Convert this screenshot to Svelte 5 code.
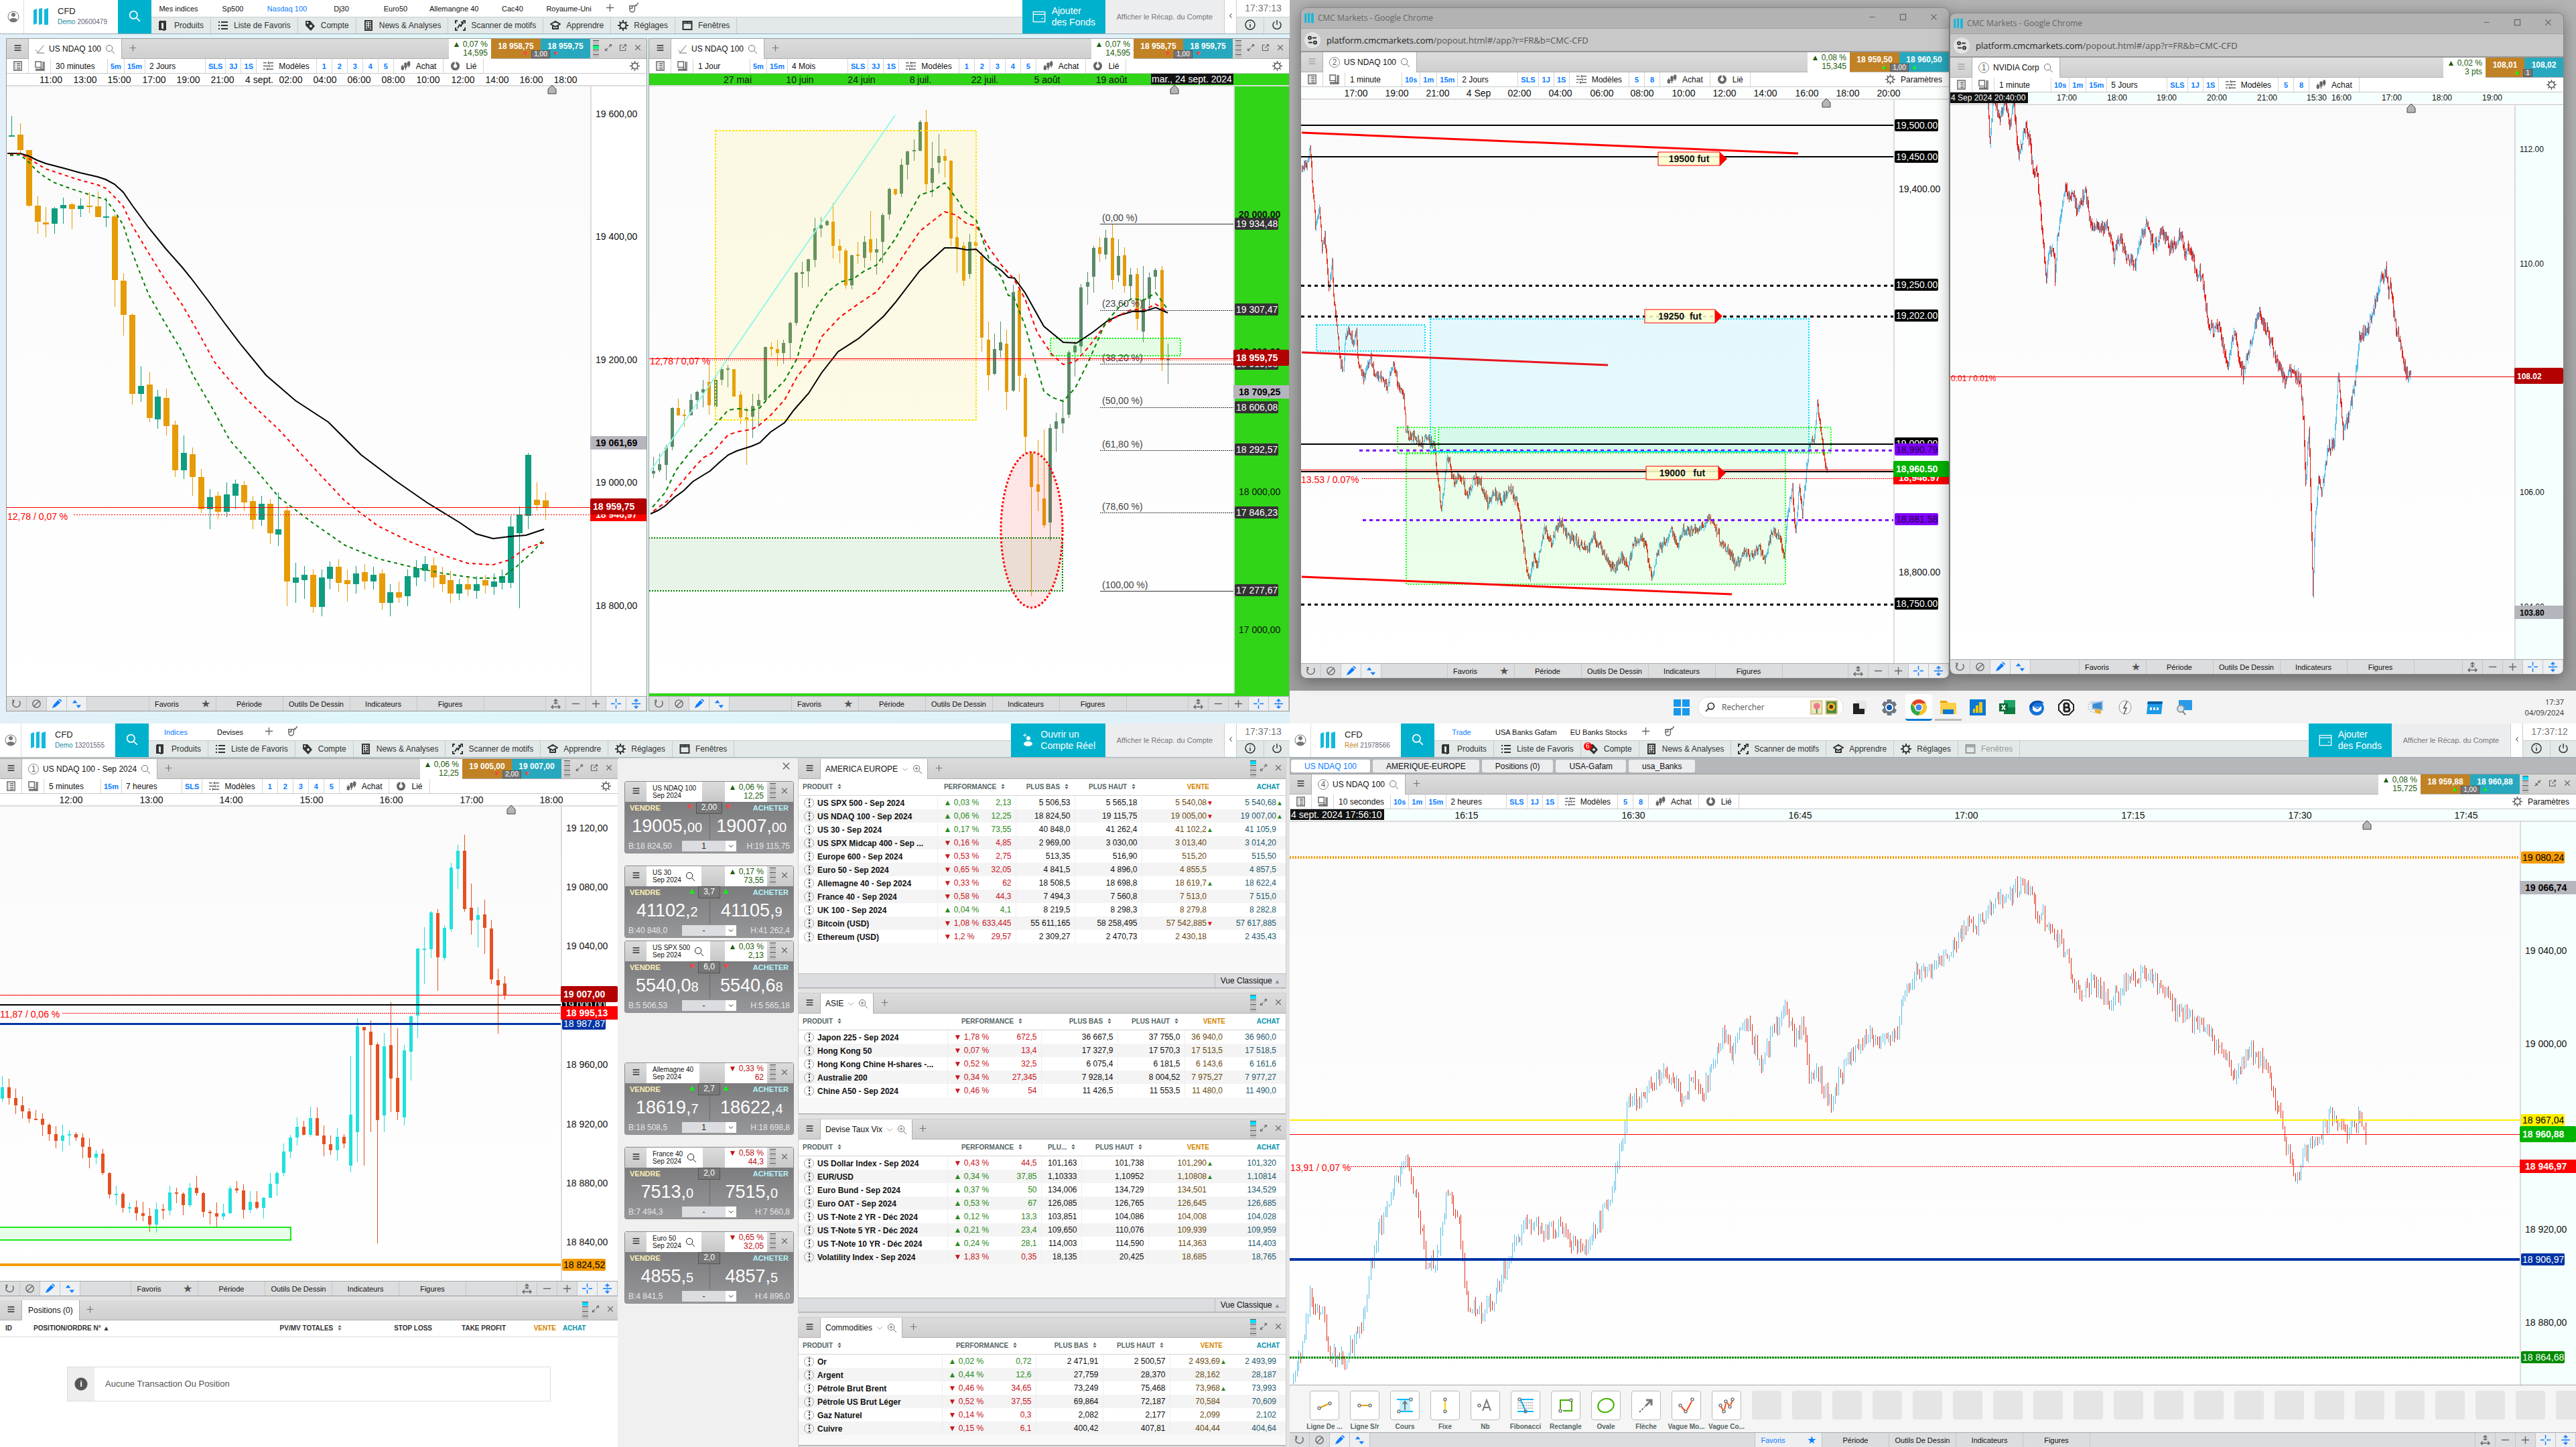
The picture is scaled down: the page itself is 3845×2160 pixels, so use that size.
<script lang="ts">
  type Bar = [number, number, number, number, number];
  type Candle = { x: number; up: boolean; top: number; bottom: number; high: number; low: number };
  type Point = [number, number];

  let seed = 7;
  function random() {
    seed = (seed * 16807) % 2147483647;
    return seed / 2147483647;
  }

  // Bars are [up, top, bottom, high, low] in chart pixels
  function series(startX: number, step: number, bars: Bar[]): Candle[] {
    return bars.map(([up, top, bottom, high, low], i) => ({
      x: Math.round(startX + i * step),
      up: up === 1,
      top,
      bottom: Math.max(bottom, top + 2),
      high,
      low
    }));
  }

  // Fills the space between two anchors with small random moves
  function walk(anchors: Point[], step: number, noise: number, wick: number): Candle[] {
    const candles: Candle[] = [];
    let previous = anchors[0][1];
    let segment = 0;
    for (let x = anchors[0][0]; x <= anchors[anchors.length - 1][0]; x += step) {
      while (segment < anchors.length - 2 && x > anchors[segment + 1][0]) segment++;
      const [x1, y1] = anchors[segment];
      const [x2, y2] = anchors[segment + 1];
      const base = y1 + ((y2 - y1) * (x - x1)) / (x2 - x1);
      const y = base + (random() - 0.5) * noise;
      const top = Math.min(previous, y);
      const bottom = Math.max(previous, y);
      candles.push({
        x: Math.round(x),
        up: y < previous,
        top,
        bottom: Math.max(bottom, top + 2),
        high: top - random() * wick,
        low: bottom + random() * wick
      });
      previous = y;
    }
    return candles;
  }

  function wicks(candles: Candle[], up: boolean) {
    return candles.filter((c) => c.up === up).map((c) => `M${c.x} ${Math.round(c.high)}V${Math.round(c.low)}`).join('');
  }

  function bodies(candles: Candle[], up: boolean) {
    return candles.filter((c) => c.up === up).map((c) => `M${c.x} ${Math.round(c.top)}V${Math.round(c.bottom)}`).join('');
  }

  const halfHour = series(17, 12.85, [
    [1, 202, 204, 173, 204], [0, 201, 224, 184, 229], [0, 224, 307, 224, 309], [0, 307, 331, 293, 349],
    [0, 332, 335, 309, 354], [1, 311, 334, 309, 349], [1, 306, 311, 295, 334], [0, 305, 312, 303, 342],
    [1, 307, 312, 296, 324], [0, 307, 308, 287, 318], [0, 308, 324, 286, 324], [1, 323, 324, 295, 339],
    [0, 323, 418, 320, 458], [0, 419, 470, 408, 501], [0, 470, 588, 468, 604], [1, 576, 588, 547, 600],
    [0, 574, 624, 555, 630], [1, 592, 626, 582, 640], [0, 594, 636, 580, 650], [0, 634, 702, 628, 712],
    [1, 676, 702, 650, 715], [0, 678, 712, 668, 740], [0, 712, 760, 700, 766], [1, 742, 760, 730, 790],
    [0, 740, 764, 734, 775], [1, 738, 764, 720, 772], [1, 722, 740, 716, 760], [0, 724, 750, 718, 762],
    [0, 748, 776, 740, 790], [1, 752, 776, 740, 785], [0, 752, 796, 745, 812], [1, 790, 798, 735, 815],
    [0, 762, 868, 755, 905], [1, 862, 870, 840, 900], [1, 858, 866, 845, 894], [0, 858, 906, 850, 915],
    [1, 862, 906, 850, 920], [1, 846, 864, 838, 880], [0, 846, 870, 835, 884], [0, 866, 872, 850, 898],
    [1, 856, 872, 845, 886], [0, 854, 868, 842, 880], [1, 858, 868, 846, 880], [0, 856, 900, 850, 910],
    [1, 884, 900, 872, 920], [0, 884, 892, 868, 900], [1, 860, 890, 850, 905], [1, 848, 862, 836, 875],
    [1, 842, 852, 830, 868], [0, 844, 862, 832, 878], [0, 858, 872, 846, 884], [0, 866, 886, 852, 900],
    [1, 872, 886, 864, 896], [0, 872, 880, 862, 890], [1, 872, 882, 860, 894], [0, 866, 874, 858, 886],
    [1, 868, 876, 856, 888], [1, 860, 870, 850, 880], [1, 786, 870, 770, 878], [1, 768, 796, 756, 908],
    [1, 679, 770, 676, 790], [0, 746, 754, 720, 762], [0, 747, 757, 735, 776]
  ]);

  const daily = series(975, 9.252, [
    [1, 703, 707, 682, 714], [1, 693, 702, 677, 705], [1, 668, 694, 664, 717], [1, 609, 667, 608, 672],
    [0, 609, 620, 595, 621], [0, 619, 620, 611, 637], [1, 597, 620, 588, 620], [1, 585, 597, 583, 611],
    [1, 581, 586, 567, 608], [0, 570, 605, 543, 619], [1, 567, 607, 560, 608], [1, 551, 567, 548, 575],
    [1, 550, 551, 545, 578], [0, 551, 592, 551, 592], [0, 589, 623, 584, 633], [0, 623, 626, 608, 694],
    [1, 606, 622, 588, 654], [1, 597, 606, 588, 637], [1, 518, 597, 517, 600], [0, 518, 521, 511, 532],
    [0, 521, 527, 507, 547], [1, 512, 527, 507, 543], [1, 482, 512, 480, 536], [1, 407, 482, 406, 486],
    [1, 406, 409, 391, 430], [1, 387, 405, 386, 428], [1, 341, 388, 325, 399], [1, 336, 341, 324, 354],
    [1, 330, 336, 328, 338], [0, 331, 367, 303, 386], [0, 367, 374, 357, 393], [0, 374, 426, 371, 431],
    [1, 381, 426, 380, 432], [0, 380, 382, 361, 394], [1, 361, 385, 352, 400], [0, 357, 377, 315, 389],
    [1, 372, 377, 356, 410], [1, 321, 361, 318, 393], [1, 282, 320, 280, 328], [0, 282, 290, 282, 292],
    [1, 246, 289, 237, 294], [1, 226, 246, 225, 268], [1, 224, 226, 208, 240], [1, 182, 225, 179, 226],
    [0, 182, 275, 164, 286], [1, 251, 273, 212, 294], [1, 233, 243, 200, 259], [0, 233, 240, 222, 265],
    [0, 240, 356, 239, 367], [0, 354, 372, 323, 407], [0, 367, 419, 361, 427], [1, 361, 409, 349, 416],
    [0, 361, 367, 328, 378], [0, 382, 504, 375, 525], [0, 507, 560, 480, 583], [1, 521, 558, 498, 560],
    [1, 511, 523, 480, 534], [0, 513, 585, 492, 612], [1, 436, 583, 425, 585], [0, 433, 561, 409, 585],
    [0, 564, 652, 558, 676], [0, 677, 727, 674, 890], [0, 723, 734, 657, 763], [0, 744, 784, 641, 788],
    [1, 639, 780, 633, 807], [1, 629, 640, 616, 675], [1, 624, 632, 596, 647], [1, 526, 619, 523, 624],
    [1, 516, 526, 510, 562], [1, 429, 517, 424, 527], [1, 421, 428, 406, 455], [1, 370, 413, 367, 437],
    [0, 369, 379, 354, 391], [1, 355, 380, 343, 387], [0, 355, 418, 334, 432], [1, 382, 411, 357, 421],
    [0, 381, 427, 369, 437], [1, 410, 427, 400, 446], [0, 409, 476, 400, 493], [1, 447, 495, 397, 511],
    [1, 414, 446, 407, 461], [1, 403, 413, 400, 432], [0, 403, 537, 397, 554], [1, 536, 538, 513, 573]
  ]);

  const fiveMinutes = [
    ...walk([[3, 1640], [20, 1655], [50, 1660], [75, 1685], [110, 1700], [150, 1745], [180, 1800], [215, 1825], [245, 1790], [280, 1785], [310, 1810], [345, 1790], [385, 1808], [420, 1720], [460, 1680], [490, 1700], [513, 1710]], 10, 34, 18),
    ...series(523, 10, [
      [1, 1664, 1740, 1576, 1750], [1, 1532, 1690, 1520, 1735], [0, 1533, 1538, 1533, 1740], [0, 1540, 1560, 1523, 1690],
      [0, 1559, 1672, 1556, 1856], [1, 1562, 1665, 1542, 1690], [0, 1560, 1610, 1496, 1660], [0, 1609, 1660, 1535, 1672],
      [1, 1568, 1668, 1560, 1680], [1, 1517, 1570, 1516, 1613], [1, 1416, 1516, 1415, 1550], [1, 1416, 1417, 1384, 1469],
      [1, 1362, 1417, 1360, 1430], [0, 1363, 1429, 1357, 1479], [1, 1385, 1430, 1381, 1434], [1, 1295, 1387, 1288, 1391],
      [1, 1270, 1297, 1261, 1327], [0, 1270, 1357, 1246, 1361], [0, 1355, 1374, 1319, 1395], [1, 1366, 1373, 1354, 1414],
      [0, 1365, 1385, 1343, 1424], [0, 1386, 1462, 1373, 1469], [0, 1463, 1471, 1446, 1543], [0, 1468, 1485, 1457, 1492]
    ])
  ];

  const oneMinute = walk([
    [1943, 250], [1950, 245], [1955, 225], [1960, 290], [1963, 340], [1969, 315], [1973, 370], [1977, 350], [1983, 430],
    [1988, 395], [1990, 440], [1995, 480], [2000, 540], [2005, 550], [2008, 500], [2013, 490], [2020, 515], [2024, 495],
    [2027, 540], [2035, 570], [2045, 530], [2052, 560], [2060, 562], [2070, 578], [2079, 540], [2088, 580], [2095, 590],
    [2098, 640], [2105, 655], [2112, 650], [2120, 665], [2130, 650], [2140, 665], [2143, 690], [2151, 765], [2160, 680],
    [2170, 720], [2180, 710], [2190, 740], [2200, 715], [2210, 720], [2220, 750], [2230, 735], [2240, 750], [2253, 730],
    [2265, 750], [2272, 805], [2281, 865], [2290, 830], [2294, 845], [2305, 785], [2315, 810], [2328, 778], [2340, 800],
    [2355, 810], [2370, 822], [2378, 800], [2390, 820], [2400, 835], [2410, 852], [2420, 830], [2430, 845], [2438, 810],
    [2450, 798], [2458, 825], [2465, 858], [2475, 820], [2485, 810], [2495, 790], [2502, 815], [2513, 790], [2525, 795],
    [2540, 785], [2550, 772], [2560, 785], [2570, 815], [2580, 822], [2590, 845], [2600, 825], [2615, 830], [2625, 818],
    [2635, 835], [2645, 792], [2655, 800], [2663, 830], [2668, 765], [2675, 730], [2680, 800], [2685, 720], [2690, 765],
    [2697, 690], [2703, 650], [2707, 665], [2712, 605], [2717, 640], [2722, 680], [2727, 708]
  ], 1, 13, 6);

  const nvidia = walk([
    [2967, 160], [2970, 215], [2975, 145], [2985, 180], [2992, 150], [3000, 185], [3005, 150], [3012, 230], [3023, 190],
    [3030, 210], [3034, 260], [3040, 255], [3050, 370], [3054, 415], [3060, 365], [3066, 385], [3067, 425], [3070, 360],
    [3083, 275], [3090, 300], [3095, 285], [3100, 320], [3112, 285], [3120, 335], [3135, 340], [3145, 335], [3155, 385],
    [3163, 350], [3175, 385], [3187, 395], [3195, 355], [3204, 335], [3215, 370], [3227, 340], [3238, 372], [3255, 350],
    [3262, 385], [3266, 365], [3280, 412], [3286, 405], [3295, 480], [3303, 495], [3312, 485], [3325, 550], [3334, 495],
    [3348, 560], [3356, 525], [3370, 470], [3382, 490], [3390, 515], [3400, 545], [3410, 570], [3418, 555], [3433, 565],
    [3438, 630], [3441, 720], [3446, 640], [3452, 880], [3455, 780], [3460, 720], [3466, 730], [3474, 670], [3484, 660],
    [3490, 560], [3497, 650], [3508, 610], [3516, 560], [3521, 505], [3535, 490], [3545, 450], [3555, 415], [3561, 400],
    [3565, 440], [3567, 420], [3575, 485], [3583, 515], [3590, 555], [3598, 562]
  ], 1, 16, 8);

  const tenSeconds = walk([
    [1930, 2065], [1942, 2010], [1955, 1935], [1975, 1965], [1985, 2020], [2000, 2030], [2020, 2010], [2035, 1965],
    [2050, 1860], [2075, 1790], [2097, 1725], [2115, 1790], [2130, 1890], [2145, 1880], [2160, 1775], [2178, 1830],
    [2190, 1950], [2215, 1960], [2230, 1940], [2250, 1880], [2275, 1830], [2300, 1840], [2325, 1830], [2345, 1860],
    [2368, 1865], [2385, 1830], [2410, 1760], [2430, 1650], [2450, 1640], [2485, 1600], [2500, 1615], [2512, 1640],
    [2525, 1610], [2540, 1640], [2560, 1580], [2572, 1540], [2585, 1575], [2600, 1520], [2614, 1545], [2628, 1590],
    [2645, 1545], [2666, 1505], [2675, 1550], [2690, 1530], [2700, 1600], [2715, 1600], [2730, 1650], [2745, 1610],
    [2765, 1570], [2785, 1545], [2810, 1555], [2828, 1555], [2840, 1490], [2850, 1460], [2870, 1440], [2885, 1450],
    [2910, 1420], [2935, 1385], [2960, 1370], [2985, 1345], [3015, 1325], [3025, 1330], [3040, 1360], [3065, 1385],
    [3080, 1420], [3100, 1480], [3125, 1470], [3150, 1500], [3175, 1465], [3200, 1450], [3225, 1480], [3260, 1520],
    [3290, 1530], [3320, 1580], [3335, 1600], [3360, 1570], [3385, 1600], [3405, 1680], [3427, 1765], [3440, 1720],
    [3465, 1690], [3480, 1665], [3500, 1690], [3520, 1670], [3532, 1693]
  ], 2.75, 26, 10);

  const charts = {
    halfHour: {
      menu: true, badge: '', name: 'US NDAQ 100', spark: true, change: '0,07 %', points: '14,595', up: true,
      sell: '18 958,75', buy: '18 959,75', spread: '1,00', arrows: '▼', link: 'green', tools: true,
      period: '30 minutes', fast: ['5m', '15m'], range: '2 Jours', marks: ['SLS', '3J', '1S'], models: ['1', '2', '3', '4', '5'], linked: true, settings: false,
      x: 10, y: 110, w: 955, h: 929, right: 881, size: 14, paper: '#ffffff', body: 9,
      colors: ['#0f9d80', '#e69b07'], candles: halfHour, marker: 824,
      times: [[76, '11:00'], [127, '13:00'], [178, '15:00'], [230, '17:00'], [281, '19:00'], [332, '21:00'], [387, '4 sept.'], [434, '02:00'], [485, '04:00'], [536, '06:00'], [587, '08:00'], [639, '10:00'], [691, '12:00'], [742, '14:00'], [793, '16:00'], [844, '18:00']],
      rects: [], under: [],
      paths: [
        { color: '#000', width: 2, dash: '', d: 'M11 229L30 229 43 233 55 239 68 244 95 251 120 258 146 264 158 268 171 275 184 287 197 306 222 340 248 372 272 399 285 415 310 448 335 482 360 515 397 560 441 598 490 630 539 679 588 716 637 750 686 780 711 797 736 804 760 801 785 799 812 790' },
        { color: '#f00', width: 2, dash: '5 5', d: 'M15 231L30 229 45 238 68 252 95 261 120 269 146 276 158 281 171 294 184 308 197 336 222 378 248 420 272 455 297 498 320 540 336 560 368 596 417 642 466 696 515 748 564 785 613 809 662 829 699 841 736 843 760 836 785 818 812 810' },
        { color: '#008000', width: 2, dash: '5 5', d: 'M15 232L30 231 42 241 55 255 68 265 82 273 107 282 132 290 158 298 171 315 184 336 197 376 210 410 222 440 248 485 272 525 288 560 319 613 343 657 380 699 417 743 466 780 515 814 564 834 613 846 662 856 711 863 748 863 772 845 797 822 812 804' }
      ],
      lines: [{ y: 757, color: '#f00', width: 1, dash: '', from: 10 }, { y: 768, color: '#f00', width: 1, dash: '2 2', from: 110 }],
      labels: [{ x: 11, y: 771, text: '12,78 / 0,07 %', color: '#f00' }],
      tags: [
        { y: 170, text: '19 600,00', kind: 'plain' }, { y: 353, text: '19 400,00', kind: 'plain' }, { y: 537, text: '19 200,00', kind: 'plain' },
        { y: 661, text: '19 061,69', kind: 'mid', fill: '#b5b5bd', color: '#000' }, { y: 720, text: '19 000,00', kind: 'plain' },
        { y: 768, text: '18 946,97', kind: 'mid', fill: '#f00' }, { y: 756, text: '18 959,75', kind: 'big', fill: '#b30000' }, { y: 904, text: '18 800,00', kind: 'plain' }
      ]
    },
    daily: {
      menu: true, badge: '', name: 'US NDAQ 100', spark: true, change: '0,07 %', points: '14,595', up: true,
      sell: '18 958,75', buy: '18 959,75', spread: '1,00', arrows: '▼', link: '', tools: true,
      period: '1 Jour', fast: ['5m', '15m'], range: '4 Mois', marks: ['SLS', '3J', '1S'], models: ['1', '2', '3', '4', '5'], linked: true, settings: false,
      x: 969, y: 110, w: 955, h: 929, right: 1841, size: 14, paper: '#30d517', body: 5,
      colors: ['#5a8a68', '#e69b07'], candles: daily, marker: 1753,
      times: [[1101, '27 mai'], [1194, '10 juin'], [1286, '24 juin'], [1374, '8 juil.'], [1470, '22 juil.'], [1563, '5 août'], [1659, '19 août']],
      stamp: { x: 1718, w: 123, text: 'mar., 24 sept. 2024' },
      rects: [
        { x: 1068, y: 195, w: 389, h: 432, fill: '#ffe60018', color: '#ffe600', dash: '3 2' },
        { x: 968, y: 803, w: 618, h: 79, fill: '#00800015', color: '#008000', dash: '2 2' },
        { x: 1568, y: 505, w: 194, h: 26, fill: '#00ff0018', color: '#0f0', dash: '2 2' }
      ],
      ellipse: { cx: 1540, cy: 791, rx: 46, ry: 116 },
      under: [{ color: '#96f7e8', width: 2, d: 'M971 703L1336 172' }],
      paths: [
        { color: '#000', width: 2, dash: '', d: 'M971 767L982 762 993 755 1006 743 1021 732 1034 719 1050 709 1060 703 1074 690 1087 679 1100 673 1122 666 1134 661 1150 645 1171 631 1185 612 1207 587 1226 557 1251 525 1282 505 1299 490 1319 472 1336 452 1373 404 1410 370 1427 370 1443 373 1457 372 1477 391 1495 404 1505 414 1514 415 1530 437 1558 487 1587 511 1607 512 1631 496 1653 479 1670 471 1690 465 1707 465 1725 459 1743 467' },
        { color: '#f00', width: 2, dash: '6 5', d: 'M975 763L996 748 1009 730 1037 697 1050 683 1062 677 1087 649 1103 644 1122 641 1134 634 1150 620 1171 597 1190 562 1214 532 1226 503 1254 473 1282 453 1308 436 1336 400 1373 345 1410 316 1427 321 1443 334 1457 337 1477 371 1495 396 1513 416 1530 446 1548 496 1570 529 1587 544 1605 540 1625 518 1650 484 1670 471 1689 462 1707 463 1725 454 1743 466' },
        { color: '#008000', width: 2, dash: '6 5', d: 'M974 757L993 735 1009 702 1030 675 1050 653 1065 637 1087 612 1103 610 1120 613 1134 609 1150 590 1171 568 1190 535 1198 504 1217 461 1235 436 1254 421 1274 416 1291 404 1308 396 1336 357 1356 321 1373 291 1392 285 1410 273 1429 298 1440 316 1457 328 1477 389 1495 414 1505 441 1513 443 1530 486 1545 539 1558 584 1570 593 1587 599 1605 579 1625 539 1650 482 1670 459 1689 446 1707 448 1725 437 1743 462' }
      ],
      lines: [
        { y: 334, color: '#333', width: 1, dash: '', from: 1642 }, { y: 463, color: '#333', width: 1, dash: '2 1', from: 1642 },
        { y: 543, color: '#333', width: 1, dash: '2 1', from: 1642 }, { y: 608, color: '#333', width: 1, dash: '2 1', from: 1642 },
        { y: 672, color: '#333', width: 1, dash: '2 1', from: 1642 }, { y: 765, color: '#333', width: 1, dash: '2 1', from: 1642 },
        { y: 882, color: '#333', width: 1, dash: '', from: 1642 }, { y: 535, color: '#f00', width: 1, dash: '', from: 969 },
        { y: 537, color: '#f00', width: 1, dash: '1 2', from: 1060 }
      ],
      labels: [
        { x: 970, y: 539, text: '12,78 / 0,07 %', color: '#f00' },
        { x: 1645, y: 325, text: '(0,00 %)', color: '#444' }, { x: 1645, y: 453, text: '(23,60 %)', color: '#444' },
        { x: 1645, y: 534, text: '(38,20 %)', color: '#444' }, { x: 1645, y: 598, text: '(50,00 %)', color: '#444' },
        { x: 1645, y: 663, text: '(61,80 %)', color: '#444' }, { x: 1645, y: 756, text: '(78,60 %)', color: '#444' }, { x: 1645, y: 873, text: '(100,00 %)', color: '#444' }
      ],
      tags: [
        { y: 320, text: '20 000,00', kind: 'plain', bold: true }, { y: 334, text: '19 934,48', kind: 'pill', fill: '#333' },
        { y: 462, text: '19 307,47', kind: 'pill', fill: '#333' }, { y: 525, text: '19 000,00', kind: 'plain', bold: true },
        { y: 543, text: '18 919,58', kind: 'pill', fill: '#333' }, { y: 534, text: '18 959,75', kind: 'big', fill: '#b30000' },
        { y: 585, text: '18 709,25', kind: 'mid', fill: '#b5b5bd', color: '#000' }, { y: 608, text: '18 606,08', kind: 'pill', fill: '#333' },
        { y: 671, text: '18 292,57', kind: 'pill', fill: '#333' }, { y: 734, text: '18 000,00', kind: 'plain' },
        { y: 765, text: '17 846,23', kind: 'pill', fill: '#333' }, { y: 881, text: '17 277,67', kind: 'pill', fill: '#333' }, { y: 940, text: '17 000,00', kind: 'plain' }
      ]
    },
    oneMinute: {
      menu: false, badge: '2', name: 'US NDAQ 100', spark: false, change: '0,08 %', points: '15,345', up: true,
      sell: '18 959,50', buy: '18 960,50', spread: '1,00', arrows: '▲', link: '', tools: false,
      period: '1 minute', fast: ['10s', '1m', '15m'], range: '2 Jours', marks: ['SLS', '1J', '1S'], models: ['5', '8'], linked: true, settings: true,
      x: 1942, y: 130, w: 967, h: 860, right: 2826, size: 14, paper: '#fcfffe', body: 1,
      colors: ['#58bfe8', '#e6301a'], candles: oneMinute, marker: 2726,
      times: [[2024, '17:00'], [2085, '19:00'], [2146, '21:00'], [2207, '4 Sep'], [2268, '02:00'], [2329, '04:00'], [2391, '06:00'], [2451, '08:00'], [2513, '10:00'], [2574, '12:00'], [2635, '14:00'], [2697, '16:00'], [2758, '18:00'], [2819, '20:00']],
      rects: [
        { x: 1965, y: 485, w: 162, h: 39, fill: '#00d8ff18', color: '#00e0ff', dash: '2 2' },
        { x: 2135, y: 476, w: 565, h: 198, fill: '#00d8ff18', color: '#00e0ff', dash: '2 2' },
        { x: 2086, y: 638, w: 56, h: 39, fill: '#00ff0012', color: '#1cff1c', dash: '2 2' },
        { x: 2147, y: 638, w: 586, h: 38, fill: '#00ff0012', color: '#1cff1c', dash: '2 2' },
        { x: 2099, y: 676, w: 566, h: 196, fill: '#00ff0014', color: '#1cff1c', dash: '2 2' }
      ],
      under: [],
      paths: [
        { color: '#f00', width: 3, dash: '', d: 'M1943 198L2684 229' }, { color: '#e8141c', width: 3, dash: '', d: 'M1943 526L2400 545' },
        { color: '#f00', width: 3, dash: '', d: 'M1943 861L2585 887' }
      ],
      lines: [
        { y: 187, color: '#000', width: 2, dash: '', from: 1942 }, { y: 234, color: '#000', width: 2, dash: '', from: 1942 },
        { y: 426, color: '#000', width: 3, dash: '5 5', from: 1942 }, { y: 472, color: '#000', width: 3, dash: '5 5', from: 1942 },
        { y: 663, color: '#000', width: 2, dash: '', from: 1942 }, { y: 672, color: '#8000ff', width: 3, dash: '5 5', from: 2029 },
        { y: 674, color: '#00d5ff', width: 2, dash: '', from: 2135, to: 2665 },
        { y: 704, color: '#000', width: 2, dash: '', from: 1942 }, { y: 701, color: '#f00', width: 1, dash: '', from: 1942 },
        { y: 714, color: '#f00', width: 1, dash: '2 1', from: 2033 }, { y: 776, color: '#8000ff', width: 3, dash: '5 5', from: 2034 },
        { y: 902, color: '#000', width: 3, dash: '5 5', from: 1942 }
      ],
      labels: [{ x: 1942, y: 716, text: '13.53 / 0.07%', color: '#f00' }],
      notes: [{ x: 2475, y: 227, w: 92, text: '19500 fut' }, { x: 2455, y: 462, w: 105, text: '19250  fut' }, { x: 2457, y: 696, w: 108, text: '19000   fut' }],
      tags: [
        { y: 187, text: '19,500.00', kind: 'pill', fill: '#000' }, { y: 234, text: '19,450.00', kind: 'pill', fill: '#000' },
        { y: 282, text: '19,400.00', kind: 'plain' }, { y: 425, text: '19,250.00', kind: 'pill', fill: '#000' }, { y: 471, text: '19,202.00', kind: 'pill', fill: '#000' },
        { y: 662, text: '19,000.00', kind: 'pill', fill: '#000' }, { y: 671, text: '18,990.79', kind: 'pill', fill: '#8000ff', color: '#200040' },
        { y: 713, text: '18,946.97', kind: 'mid', fill: '#f00' }, { y: 700, text: '18,960.50', kind: 'big', fill: '#00b300' },
        { y: 775, text: '18,881.58', kind: 'pill', fill: '#8000ff', color: '#200040' }, { y: 854, text: '18,800.00', kind: 'plain' }, { y: 901, text: '18,750.00', kind: 'pill', fill: '#000' }
      ]
    },
    nvidia: {
      menu: false, badge: '1', name: 'NVIDIA Corp', spark: false, change: '0,02 %', points: '3 pts', up: true,
      sell: '108,01', buy: '108,02', spread: '1', arrows: '▲', link: '', tools: false, small: true,
      period: '1 minute', fast: ['10s', '1m', '15m'], range: '5 Jours', marks: ['SLS', '1J', '1S'], models: ['5', '8'], linked: false, settings: false,
      x: 2911, y: 138, w: 915, h: 846, right: 3753, size: 12, paper: '#f5fffe', body: 1,
      colors: ['#58bfe8', '#e6201a'], candles: nvidia, marker: 3599,
      times: [[3085, '17:00'], [3160, '18:00'], [3234, '19:00'], [3309, '20:00'], [3384, '21:00'], [3458, '15:30'], [3495, '16:00'], [3570, '17:00'], [3645, '18:00'], [3720, '19:00']],
      stamp: { x: 2911, w: 116, text: '4 Sep 2024 20:40:00' },
      rects: [], under: [], paths: [],
      lines: [{ y: 562, color: '#e00', width: 1, dash: '', from: 2911 }],
      labels: [{ x: 2912, y: 564, text: '0.01 / 0.01%', color: '#f00' }],
      tags: [
        { y: 222, text: '112.00', kind: 'plain' }, { y: 393, text: '110.00', kind: 'plain' }, { y: 561, text: '108.02', kind: 'big', fill: '#b30000' },
        { y: 734, text: '106.00', kind: 'plain' }, { y: 905, text: '104.00', kind: 'plain' }, { y: 914, text: '103.80', kind: 'mid', fill: '#b5b5bd', color: '#000' }
      ]
    },
    fiveMinutes: {
      menu: true, badge: '1', name: 'US NDAQ 100 - Sep 2024', spark: false, change: '0,06 %', points: '12,25', up: true,
      sell: '19 005,00', buy: '19 007,00', spread: '2,00', arrows: '▼', link: '', tools: true,
      period: '5 minutes', fast: ['15m'], range: '7 heures', marks: ['SLS'], models: ['1', '2', '3', '4', '5'], linked: true, settings: false,
      x: 0, y: 1185, w: 922, h: 727, right: 837, size: 14, paper: '#ffffff', body: 5,
      colors: ['#22e0dc', '#e65020'], candles: fiveMinutes, marker: 763,
      times: [[106, '12:00'], [226, '13:00'], [345, '14:00'], [465, '15:00'], [584, '16:00'], [704, '17:00'], [823, '18:00']],
      rects: [{ x: -2, y: 1832, w: 436, h: 19, fill: '#00ff0018', color: '#1ce81c', dash: '' }],
      under: [], paths: [],
      lines: [
        { y: 1485, color: '#f00', width: 1, dash: '', from: 0 }, { y: 1500, color: '#000', width: 2, dash: '', from: 0 },
        { y: 1512, color: '#f00', width: 1, dash: '2 1', from: 93 }, { y: 1528, color: '#0033a5', width: 3, dash: '', from: 0 },
        { y: 1888, color: '#f59b00', width: 4, dash: '', from: 0 }
      ],
      labels: [{ x: 0, y: 1514, text: '11,87 / 0,06 %', color: '#f00' }],
      tags: [
        { y: 1236, text: '19 120,00', kind: 'plain' }, { y: 1324, text: '19 080,00', kind: 'plain' }, { y: 1412, text: '19 040,00', kind: 'plain' },
        { y: 1500, text: '19 000,00', kind: 'pill', fill: '#000' }, { y: 1528, text: '18 987,87', kind: 'pill', fill: '#0033a5' },
        { y: 1512, text: '18 995,13', kind: 'mid', fill: '#f00' }, { y: 1484, text: '19 007,00', kind: 'big', fill: '#b30000' },
        { y: 1589, text: '18 960,00', kind: 'plain' }, { y: 1678, text: '18 920,00', kind: 'plain' }, { y: 1766, text: '18 880,00', kind: 'plain' },
        { y: 1854, text: '18 840,00', kind: 'plain' }, { y: 1888, text: '18 824,52', kind: 'pill', fill: '#f59b00', color: '#000' }
      ]
    },
    tenSeconds: {
      menu: true, badge: '4', name: 'US NDAQ 100', spark: false, change: '0,08 %', points: '15,725', up: true,
      sell: '18 959,88', buy: '18 960,88', spread: '1,00', arrows: '▲', link: 'cyan', tools: true,
      period: '10 secondes', fast: ['10s', '1m', '15m'], range: '2 heures', marks: ['SLS', '1J', '1S'], models: ['5', '8'], linked: true, settings: true,
      x: 1925, y: 1208, w: 1920, h: 859, right: 3761, size: 14, paper: '#f5fffe', body: 1,
      colors: ['#58bfe8', '#e6301a'], candles: tenSeconds, marker: 3533,
      times: [[2189, '16:15'], [2438, '16:30'], [2687, '16:45'], [2935, '17:00'], [3184, '17:15'], [3433, '17:30'], [3681, '17:45']],
      stamp: { x: 1926, w: 140, text: '4 sept. 2024 17:56:10' },
      rects: [], under: [], paths: [],
      lines: [
        { y: 1280, color: '#f59b00', width: 4, dash: '2 2', from: 1925 }, { y: 1672, color: '#ffee00', width: 2, dash: '', from: 1925 },
        { y: 1693, color: '#f00', width: 1, dash: '', from: 1925 }, { y: 1741, color: '#f00', width: 1, dash: '2 1', from: 2016 },
        { y: 1880, color: '#0033a5', width: 4, dash: '', from: 1925 }, { y: 2026, color: '#008a00', width: 3, dash: '3 1', from: 1925 }
      ],
      labels: [{ x: 1926, y: 1743, text: '13,91 / 0,07 %', color: '#f00' }],
      tags: [
        { y: 1280, text: '19 080,24', kind: 'pill', fill: '#f59b00', color: '#000' }, { y: 1325, text: '19 066,74', kind: 'mid', fill: '#b5b5bd', color: '#000' },
        { y: 1419, text: '19 040,00', kind: 'plain' }, { y: 1558, text: '19 000,00', kind: 'plain' }, { y: 1672, text: '18 967,04', kind: 'pill', fill: '#ffee00', color: '#000' },
        { y: 1693, text: '18 960,88', kind: 'big', fill: '#00b300' }, { y: 1741, text: '18 946,97', kind: 'mid', fill: '#f00' }, { y: 1835, text: '18 920,00', kind: 'plain' },
        { y: 1880, text: '18 906,97', kind: 'pill', fill: '#0033a5' }, { y: 1974, text: '18 880,00', kind: 'plain' }, { y: 2026, text: '18 864,68', kind: 'pill', fill: '#008a00' }
      ]
    }
  } as Record<string, any>;

  const headers = {
    first: { kind: 'Demo', id: '20600479', tabs: ['Mes indices', 'Sp500', 'Nasdaq 100', 'Dj30', 'Euro50', 'Allemangne 40', 'Cac40', 'Royaume-Uni'], active: 'Nasdaq 100', cta: ['Ajouter', 'des Fonds'], ctaIcon: 'wallet', time: '17:37:13' },
    third: { kind: 'Demo', id: '13201555', tabs: ['Indices', 'Devises'], active: 'Indices', cta: ['Ouvrir un', 'Compte Réel'], ctaIcon: 'person', time: '17:37:13' },
    fourth: { kind: 'Réel', id: '21978566', tabs: ['Trade', 'USA Banks Gafam', 'EU Banks Stocks'], active: 'Trade', cta: ['Ajouter', 'des Fonds'], ctaIcon: 'wallet', time: '17:37:12', alerts: '6' }
  } as Record<string, any>;

  const nav = [
    ['products', 'Produits'], ['list', 'Liste de Favoris'], ['tag', 'Compte'], ['news', 'News & Analyses'],
    ['pattern', 'Scanner de motifs'], ['learn', 'Apprendre'], ['gear', 'Réglages'], ['window', 'Fenêtres']
  ];

  const tickets = [
    { id: 'ndaq', name: 'US NDAQ 100', search: false, up: true, change: '0,06 %', points: '12,25', spread: '2,00', arrow: '▼', sell: ['19005,', '00'], buy: ['19007,', '00'], low: '18 824,50', high: '19 115,75', qty: '1', gap: 'wide' },
    { id: 'us30', name: 'US 30', search: true, up: true, change: '0,17 %', points: '73,55', spread: '3,7', arrow: '▲', sell: ['41102,', '2'], buy: ['41105,', '9'], low: '40 848,0', high: '41 262,4', qty: '-', gap: 'tight' },
    { id: 'spx', name: 'US SPX 500', search: true, up: true, change: '0,03 %', points: '2,13', spread: '6,0', arrow: '▼', sell: ['5540,0', '8'], buy: ['5540,6', '8'], low: '5 506,53', high: '5 565,18', qty: '-', gap: 'huge' },
    { id: 'dax', name: 'Allemagne 40', search: false, up: false, change: '0,33 %', points: '62', spread: '2,7', arrow: '▲', sell: ['18619,', '7'], buy: ['18622,', '4'], low: '18 508,5', high: '18 698,8', qty: '1', gap: 'wide' },
    { id: 'cac', name: 'France 40', search: true, up: false, change: '0,58 %', points: '44,3', spread: '2,0', arrow: '', sell: ['7513,', '0'], buy: ['7515,', '0'], low: '7 494,3', high: '7 560,8', qty: '-', gap: 'wide' },
    { id: 'stoxx', name: 'Euro 50', search: true, up: false, change: '0,65 %', points: '32,05', spread: '2,0', arrow: '', sell: ['4855,', '5'], buy: ['4857,', '5'], low: '4 841,5', high: '4 896,0', qty: '-', gap: 'tight' }
  ];

  // [name, up, change, points, low, high, sell, sell arrow, buy, buy arrow]
  const watchlists = [
    { id: 'west', name: 'AMERICA EUROPE', low: 'PLUS BAS', footer: true, rows: [
      ['US SPX 500 - Sep 2024', 1, '0,03 %', '2,13', '5 506,53', '5 565,18', '5 540,08', '▼', '5 540,68', '▲'],
      ['US NDAQ 100 - Sep 2024', 1, '0,06 %', '12,25', '18 824,50', '19 115,75', '19 005,00', '▼', '19 007,00', '▲'],
      ['US 30 - Sep 2024', 1, '0,17 %', '73,55', '40 848,0', '41 262,4', '41 102,2', '▲', '41 105,9', ''],
      ['US SPX Midcap 400 - Sep ...', 0, '0,16 %', '4,85', '2 969,00', '3 030,00', '3 013,40', '', '3 014,20', ''],
      ['Europe 600 - Sep 2024', 0, '0,53 %', '2,75', '513,35', '516,90', '515,20', '', '515,50', ''],
      ['Euro 50 - Sep 2024', 0, '0,65 %', '32,05', '4 841,5', '4 896,0', '4 855,5', '', '4 857,5', ''],
      ['Allemagne 40 - Sep 2024', 0, '0,33 %', '62', '18 508,5', '18 698,8', '18 619,7', '▲', '18 622,4', ''],
      ['France 40 - Sep 2024', 0, '0,58 %', '44,3', '7 494,3', '7 560,8', '7 513,0', '', '7 515,0', ''],
      ['UK 100 - Sep 2024', 1, '0,04 %', '4,1', '8 219,5', '8 298,3', '8 279,8', '', '8 282,8', ''],
      ['Bitcoin (USD)', 0, '1,08 %', '633,445', '55 611,165', '58 258,495', '57 542,885', '▼', '57 617,885', ''],
      ['Ethereum (USD)', 0, '1,2 %', '29,57', '2 309,27', '2 470,73', '2 430,18', '', '2 435,43', '']
    ] },
    { id: 'asia', name: 'ASIE', low: 'PLUS BAS', footer: false, rows: [
      ['Japon 225 - Sep 2024', 0, '1,78 %', '672,5', '36 667,5', '37 755,0', '36 940,0', '', '36 960,0', ''],
      ['Hong Kong 50', 0, '0,07 %', '13,4', '17 327,9', '17 570,3', '17 513,5', '', '17 518,5', ''],
      ['Hong Kong Chine H-shares -...', 0, '0,52 %', '32,5', '6 075,4', '6 181,5', '6 143,6', '', '6 161,6', ''],
      ['Australie 200', 0, '0,34 %', '27,345', '7 928,14', '8 004,52', '7 975,27', '', '7 977,27', ''],
      ['Chine A50 - Sep 2024', 0, '0,46 %', '54', '11 426,5', '11 553,5', '11 480,0', '', '11 490,0', '']
    ] },
    { id: 'rates', name: 'Devise Taux Vix', low: 'PLU...', footer: true, rows: [
      ['US Dollar Index - Sep 2024', 0, '0,43 %', '44,5', '101,163', '101,738', '101,290', '▲', '101,320', ''],
      ['EUR/USD', 1, '0,34 %', '37,85', '1,10333', '1,10952', '1,10808', '▲', '1,10814', ''],
      ['Euro Bund - Sep 2024', 1, '0,37 %', '50', '134,006', '134,729', '134,501', '', '134,529', ''],
      ['Euro OAT - Sep 2024', 1, '0,53 %', '67', '126,085', '126,765', '126,645', '', '126,685', ''],
      ['US T-Note 2 YR - Déc 2024', 1, '0,12 %', '13,3', '103,851', '104,086', '104,008', '', '104,028', ''],
      ['US T-Note 5 YR - Déc 2024', 1, '0,21 %', '23,4', '109,650', '110,076', '109,939', '', '109,959', ''],
      ['US T-Note 10 YR - Déc 2024', 1, '0,24 %', '28,1', '114,003', '114,590', '114,363', '', '114,403', ''],
      ['Volatility Index - Sep 2024', 0, '1,83 %', '0,35', '18,135', '20,425', '18,685', '', '18,765', '']
    ] },
    { id: 'raw', name: 'Commodities', low: 'PLUS BAS', footer: false, rows: [
      ['Or', 1, '0,02 %', '0,72', '2 471,91', '2 500,57', '2 493,69', '▲', '2 493,99', ''],
      ['Argent', 1, '0,44 %', '12,6', '27,759', '28,370', '28,162', '', '28,187', ''],
      ['Pétrole Brut Brent', 0, '0,46 %', '34,65', '73,249', '75,468', '73,968', '▲', '73,993', ''],
      ['Pétrole US Brut Léger', 0, '0,52 %', '37,55', '69,864', '72,187', '70,584', '', '70,609', ''],
      ['Gaz Naturel', 0, '0,14 %', '0,3', '2,082', '2,177', '2,099', '', '2,102', ''],
      ['Cuivre', 0, '0,15 %', '6,1', '400,42', '407,81', '404,44', '', '404,64', '']
    ] }
  ];

  const drawings = ['Ligne De ...', 'Ligne S/r', 'Cours', 'Fixe', 'Nb', 'Fibonacci', 'Rectangle', 'Ovale', 'Flèche', 'Vague Mo...', 'Vague Co...'];
  const emptySlots = Array.from({ length: 21 }, (_, i) => i);
  const workspaces = ['US NDAQ 100', 'AMERIQUE-EUROPE', 'Positions (0)', 'USA-Gafam', 'usa_Banks'];

  const icons: Record<string, string> = {
    menu: 'M2 3.5h12M2 8h12M2 12.5h12',
    search: 'M6.5 1.5a5 5 0 1 0 0 10a5 5 0 1 0 0-10zM10.2 10.2L15 15',
    zoom: 'M6.5 1.5a5 5 0 1 0 0 10a5 5 0 1 0 0-10zM10.2 10.2L15 15M4 6.5h5M6.5 4v5',
    plus: 'M8 2v12M2 8h12',
    close: 'M3 3l10 10M13 3L3 13',
    expand: 'M9 7l5-5M10 2h4v4M7 9l-5 5M2 10v4h4',
    shrink: 'M14 2L9 7M9 3v4h4M2 14l5-5M3 9h4v4',
    popout: 'M7 3H2v11h11V9M7 9l7-7M10 2h4v4',
    products: 'M2 2h9v12H8M2 2v12h2M4 2l5 2v11l-5-2z',
    list: 'M5 3h10M5 8h10M5 13h10M1 3h2M1 8h2M1 13h2',
    news: 'M3 1h10v14H3zM5 4h2M8.5 4h3M5 7h2M8.5 7h3M5 10h2M8.5 10h3M5 12.5h6',
    pattern: 'M1 5V1h3M12 1h3v4M15 11v4h-3M4 15H1v-4M4 12l3-5 2 2 3-6M9 3h3v3',
    learn: 'M1 6l7-4 7 4-7 4zM4 8v5h8V8',
    window: 'M1.5 2h13v12h-13zM1.5 4.5h13M8 2v2.5',
    sheet: 'M2 1h12v14H2zM4 4h1M6.5 4H12M4 7h1M6.5 7H12M4 10h1M6.5 10H12M4 12.5h1M6.5 12.5H12',
    layout: 'M1 1h9v9H1zM13 1v14M1 13h12M10 10v5M15 1v14H1',
    models: 'M0 3h5M8 3h8M8 1v4M0 8h9M12 8h4M10 6v4M0 13h3M6 13h10M6 11v4',
    candles: 'M3 6v9M1.5 9h3v4h-3zM8 2v12M6.5 4h3v6h-3zM13 0v10M11.5 2h3v5h-3z',
    reset: 'M3.5 3.5a6 6 0 1 0 9 0M3.5 7V2M1 2.5h4',
    none: 'M8 2a6 6 0 1 0 0 12a6 6 0 1 0 0-12zM12 4L4 12',
    stretch: 'M8 1v8M5 4l3-3 3 3M5 7h6M1 13h14M4 10l-3 3 3 3M12 10l3 3-3 3',
    minus: 'M2 8h12',
    cross: 'M8 0v6M8 10v6M0 8h6M10 8h6',
    spread: 'M1 8h14M8 1v5M8 10v5M5 4l3-3 3 3M5 12l3 3 3-3',
    check: 'M1 9l4 4 9-11M3 14h12',
    power: 'M8 1v7M4.5 3.5a6 6 0 1 0 7 0',
    chevron: 'M2 5l6 6 6-6',
    back: 'M11 2L5 8l6 6',
    wallet: 'M1 2h14v12H1zM1 5h14M11 10h2',
    minimize: 'M3 8h10',
    maximize: 'M3 3h10v10H3z'
  };
</script>

{#snippet icon(name: string)}
  <svg class="icon" viewBox="0 0 16 16" aria-hidden="true"><path d={icons[name]} /></svg>
{/snippet}

{#snippet sorter()}
  <svg class="sorter" viewBox="0 0 8 12" aria-hidden="true"><path d="M0 5l4-5 4 5zM0 7h8l-4 5z" /></svg>
{/snippet}

{#snippet gear()}
  <svg class="icon" viewBox="0 0 16 16" aria-hidden="true"><circle cx="8" cy="8" r="4.5" /><path d="M8 0v3M8 13v3M0 8h3M13 8h3M2.5 2.5l2 2M11.5 11.5l2 2M13.5 2.5l-2 2M4.5 11.5l-2 2" /></svg>
{/snippet}

{#snippet logo()}
  <svg class="logo" viewBox="0 0 22 26" aria-hidden="true"><path d="M0 3l5-2v22l-5 2zM8 1l5-1v24l-5 1zM16 2l6-2v25h-6z" /></svg>
{/snippet}

{#snippet link(color: string)}
  <svg class="link-bars" viewBox="0 0 9 26" aria-hidden="true">
    <path class="cells" d="M0 1h9v5H0zM0 8h9v5H0zM0 15h9v5H0zM0 22h9v4H0z" />
    {#if color === 'green'}<path class="on-green" d="M0 8h9v5H0z" />{/if}
    {#if color === 'cyan'}<path class="on-cyan" d="M0 1h9v5H0z" />{/if}
    <path class="ticks" d="M0 .5h9M0 7.5h9M0 14.5h9M0 21.5h9" />
  </svg>
{/snippet}

{#snippet appHeader(h: any, cls: string)}
  <header class="app-header {cls}">
    <button class="user" aria-label="Profil"><svg class="avatar" viewBox="0 0 18 18"><circle cx="9" cy="9" r="8" /><path d="M9 3a3 3 0 1 0 0 6a3 3 0 1 0 0-6zM3 14c1-4 11-4 12 0c-3 4-9 4-12 0z" /></svg></button>
    <div class="brand">
      {@render logo()}
      <div>
        <strong>CFD</strong>
        <span><b class={h.kind === 'Réel' ? 'live' : ''}>{h.kind}</b> {h.id}</span>
      </div>
    </div>
    <button class="find" aria-label="Rechercher un produit">{@render icon('search')}</button>
    <div class="middle">
      <div class="layouts">
        {#each h.tabs as tab (tab)}
          <button class={tab === h.active ? 'active' : ''}>{tab}</button>
        {/each}
        <button class="mini" aria-label="Ajouter">{@render icon('plus')}</button>
        <button class="mini" aria-label="Souris"><svg class="icon" viewBox="0 0 16 16"><path d="M2 5h8v6a4 4 0 0 1-8 0zM6 5v4H2M11 3l1 2 4-5" /></svg></button>
      </div>
      <nav>
        {#each nav as [glyph, label] (label)}
          <button class={glyph === 'window' && h.alerts ? 'dim' : ''}>
            {#if glyph === 'gear'}
              {@render gear()}
            {:else if glyph === 'tag'}
              <svg class="icon solid" viewBox="0 0 16 16"><path d="M1 1l7 0 7 8-6 7-8-8z" /><circle cx="4" cy="4" r="1.5" /><circle cx="9" cy="9" r="2" /></svg>
              {#if h.alerts}<span class="alerts">{h.alerts}</span>{/if}
            {:else}
              {@render icon(glyph)}
            {/if}
            {label}
          </button>
        {/each}
      </nav>
    </div>
    <button class="cta">
      {#if h.ctaIcon === 'wallet'}{@render icon('wallet')}{:else}
        <svg class="icon" viewBox="0 0 16 20"><path d="M4 0v5M1 2.5h5" /><path class="fill" d="M9 4a3 3 0 1 0 0 6a3 3 0 1 0 0-6zM2 16c0-6 13-6 13 0c-2 4-11 4-13 0z" /></svg>
      {/if}
      <span>{h.cta[0]}<br />{h.cta[1]}</span>
    </button>
    <button class="recap">Afficher le Récap. du Compte</button>
    <button class="fold" aria-label="Replier">{@render icon('back')}</button>
    <div class="clock">
      <time>{h.time}</time>
      <div>
        <button aria-label="Informations"><svg class="icon" viewBox="0 0 16 16"><circle cx="8" cy="8" r="7" /><path d="M8 7v5M8 4v1" /></svg></button>
        <button aria-label="Quitter">{@render icon('power')}</button>
      </div>
    </div>
  </header>
{/snippet}

{#snippet plot(c: any)}
  <svg class="plot" viewBox="{c.x} {c.y} {c.w} {c.h}" preserveAspectRatio="xMinYMin meet" role="img" aria-label="Graphique {c.name}">
    <rect x={c.x} y={c.y} width={c.w} height={c.size === 12 ? 15 : 17} fill={c.paper} />
    <rect x={c.x} y={c.y + 17} width={c.right - c.x} height={c.h - 17} fill="url(#plot-shade)" />
    <rect x={c.right} y={c.y + 17} width={c.x + c.w - c.right} height={c.h - 17} fill={c.paper} />
    <path d="M{c.x} {c.y + 18}H{c.x + c.w}M{c.right + 1} {c.y + 18}V{c.y + c.h}" stroke="#dcdcdc" stroke-width="2" />
    {#each c.times as [x, text] (x)}
      <text x={x} y={c.y + (c.size === 12 ? 12 : 14)} text-anchor="middle" font-size={c.size}>{text}</text>
    {/each}
    {#if c.stamp}
      <rect x={c.stamp.x} y={c.y} width={c.stamp.w} height="16" />
      <text x={c.stamp.x + 1} y={c.y + (c.size === 12 ? 12 : 13)} fill="#fff" font-size={c.size}>{c.stamp.text}</text>
    {/if}
    <path d="M{c.marker - 6} {c.y + 30}v-7l6-6 6 6v7z" fill="#b5b5b5" stroke="#444" />
    {#if c.paper === '#30d517'}
      <path d="M{c.x} {c.y + c.h - 2}H{c.x + c.w}" stroke="#30d517" stroke-width="4" />
    {/if}
    <g clip-path="url(#clip-{c.x})">
      <g class="crisp">
        <path d={wicks(c.candles, true)} stroke={c.colors[0]} />
        <path d={wicks(c.candles, false)} stroke={c.colors[1]} />
        {#if c.body > 1}
          <path d={bodies(c.candles, true)} stroke={c.colors[0]} stroke-width={c.body} />
          <path d={bodies(c.candles, false)} stroke={c.colors[1]} stroke-width={c.body} />
        {/if}
      </g>
      {#each c.rects as r}
        <rect x={r.x} y={r.y} width={r.w} height={r.h} fill={r.fill} stroke={r.color} stroke-width="2" stroke-dasharray={r.dash} />
      {/each}
      {#if c.ellipse}
        <ellipse cx={c.ellipse.cx} cy={c.ellipse.cy} rx={c.ellipse.rx} ry={c.ellipse.ry} fill="#ff000018" stroke="#f00" stroke-width="3" stroke-dasharray="3 3" />
      {/if}
      {#each c.under as p}<path d={p.d} stroke={p.color} stroke-width={p.width} fill="none" />{/each}
      {#each c.paths as p}
        <path d={p.d} stroke={p.color} stroke-width={p.width} stroke-dasharray={p.dash} fill="none" />
      {/each}
      {#each c.labels as l}
        <text x={l.x} y={l.y + 5} fill={l.color} font-size={c.size}>{l.text}</text>
      {/each}
      <g class="crisp">
        {#each c.lines as l}
          <path d="M{l.from} {l.y}H{l.to ?? c.right}" stroke={l.color} stroke-width={l.width} stroke-dasharray={l.dash} />
        {/each}
      </g>
      {#each c.notes ?? [] as n}
        <rect x={n.x} y={n.y} width={n.w} height="20" fill="#ffffd0dd" stroke="#f00" />
        <path d="M{n.x + n.w} {n.y}l11 10-11 11z" fill="#f00" />
        <text class="note" x={n.x + n.w / 2} y={n.y + 15} text-anchor="middle" font-size="14">{n.text}</text>
      {/each}
    </g>
    <clipPath id="clip-{c.x}"><rect x={c.x} y={c.y + 16} width={c.right - c.x} height={c.h - 16} /></clipPath>
    {#each c.tags as t}
      {#if t.kind === 'plain'}
        <text x={c.right + 8} y={t.y + 5} font-size={c.size} font-weight={t.bold ? 700 : 400}>{t.text}</text>
      {:else if t.kind === 'pill'}
        <rect x={c.right + 2} y={t.y - 9} width="65" height="18" rx="2" fill={t.fill} />
        <text x={c.right + 4} y={t.y + 5} font-size={c.size} fill={t.color ?? '#fff'}>{t.text}</text>
      {:else if t.kind === 'mid'}
        <rect x={c.right} y={t.y - 10} width={c.x + c.w - c.right} height="20" fill={t.fill} />
        <text x={c.right + 8} y={t.y + 5} font-size={c.size} font-weight="700" fill={t.color ?? '#fff'}>{t.text}</text>
      {:else}
        <rect x={c.right} y={t.y - 12} width={c.x + c.w - c.right} height="24" rx="2" fill={t.fill} />
        <text x={c.right + 4} y={t.y + 5} font-size={c.size} font-weight="700" fill="#fff">{t.text}</text>
      {/if}
    {/each}
  </svg>
{/snippet}

{#snippet chartPanel(c: any, favourite: boolean)}
  <section class="chart">
    <div class="tabbar">
      <button class={c.menu ? 'menu' : 'menu faded'} aria-label="Menu">{@render icon('menu')}</button>
      <div class="tab">
        {#if c.spark}{@render icon('check')}{/if}
        {#if c.badge}<span class="round">{c.badge}</span>{/if}
        <span>{c.name}</span>
        {@render icon('search')}
      </div>
      {#if c.tools}<button class="add" aria-label="Nouvel onglet">{@render icon('plus')}</button>{/if}
      <div class="change up"><span>▲ {c.change}</span><span>{c.points}</span></div>
      <div class={c.small ? 'quote small' : 'quote'}>
        <button class="sell">{c.sell}</button>
        <button class="buy">{c.buy}</button>
        <span class="spread {c.arrows === '▲' ? 'rise' : 'fall'}"><i>{c.arrows}</i><b>{c.spread}</b><i>{c.small ? '' : c.arrows}</i></span>
      </div>
      {#if c.tools}
        {@render link(c.link)}
        <div class="actions">
          <button aria-label="Agrandir">{@render icon(favourite ? 'shrink' : 'expand')}</button>
          <button aria-label="Détacher">{@render icon('popout')}</button>
          <button aria-label="Fermer">{@render icon('close')}</button>
        </div>
      {/if}
    </div>
    <div class="toolbar">
      <button class="square" aria-label="Liste">{@render icon('sheet')}</button>
      <button class="square" aria-label="Disposition">{@render icon('layout')}</button>
      <select class="period" aria-label="Intervalle"><option>{c.period}</option></select>
      {#each c.fast as f (f)}<button class="chip">{f}</button>{/each}
      <select class="range" aria-label="Durée"><option>{c.range}</option></select>
      {#each c.marks as m (m)}<button class="chip">{m}</button>{/each}
      <button class="word">{@render icon('models')}Modèles</button>
      {#each c.models as m (m)}<button class="chip">{m}</button>{/each}
      <button class="word">{@render icon('candles')}Achat</button>
      {#if c.linked}
        <button class="word"><svg class="icon ring" viewBox="0 0 16 16"><circle cx="8" cy="8" r="5" /><path d="M8 8V1" /></svg>Lié</button>
      {/if}
      <button class="settings">{@render gear()}{c.settings ? 'Paramètres' : ''}</button>
    </div>
    {@render plot(c)}
    {#if favourite}
      <div class="drawings">
        {#each drawings as d, i (d)}
          <button class="drawing">
            <span>
              <svg viewBox="0 0 24 24">
                {#if i === 0}<path class="gold" d="M6 15l11-5" /><circle cx="4" cy="16" r="2" /><circle cx="20" cy="9" r="2" />
                {:else if i === 1}<path class="gold" d="M7 12h10" /><circle cx="4" cy="12" r="2" /><circle cx="20" cy="12" r="2" />
                {:else if i === 2}<rect x="4" y="3" width="16" height="18" fill="#bfeeff" /><path class="sky" d="M0 3h18M6 21h18" /><path d="M12 19V7M9 10l3-4 3 4" /><circle cx="21" cy="3" r="2" /><circle cx="3" cy="21" r="2" />
                {:else if i === 3}<path class="yellow" d="M12 6v12" /><circle cx="12" cy="3" r="2" /><circle cx="12" cy="21" r="2" />
                {:else if i === 4}<circle cx="3" cy="12" r="2" /><path d="M8 20l6-16 6 16M10 15h8" />
                {:else if i === 5}<path class="sky" d="M5 3h19M0 21h24M5 4l7 16" /><path class="dots" d="M0 8h24M0 12h24M0 16h24" /><circle cx="3" cy="3" r="2" /><circle cx="12" cy="21" r="2" />
                {:else if i === 6}<path class="green" d="M18 4H4v13M8 20h13V6" /><circle cx="20" cy="4" r="2" /><circle cx="4" cy="20" r="2" />
                {:else if i === 7}<ellipse class="green" cx="12" cy="12" rx="12" ry="10" transform="rotate(-20 12 12)" />
                {:else if i === 8}<path class="bold" d="M11 13l9-9M12 4h8v8" /><path class="bold dots" d="M2 22l8-8" />
                {:else if i === 9}<path class="red" d="M5 14l5 6M13 19l7-13" /><circle cx="3" cy="12" r="2" /><circle cx="11" cy="21" r="2" /><circle cx="21" cy="3" r="2" />
                {:else}<path class="red" d="M4 14l3 5M9 18l2-9M13 8l3 4M18 11l3-6" /><circle cx="3" cy="12" r="2" /><circle cx="8" cy="21" r="2" /><circle cx="11" cy="6" r="2" /><circle cx="17" cy="14" r="2" /><circle cx="21" cy="3" r="2" />{/if}
              </svg>
            </span>
            {d}
          </button>
        {/each}
        {#each emptySlots as slot (slot)}<i class="empty"></i>{/each}
      </div>
    {/if}
    <div class="bottombar">
      <button class="square" aria-label="Réinitialiser">{@render icon('reset')}</button>
      <button class="square" aria-label="Effacer">{@render icon('none')}</button>
      <button class="square on" aria-label="Dessiner"><svg class="icon filled" viewBox="0 0 16 16"><path d="M1 15l2-5 7-8 4 4-8 7zM11 1l1-1 4 3-1 2z" /></svg></button>
      <button class="square on" aria-label="Trier"><svg class="icon filled" viewBox="0 0 16 16"><path d="M1 7l4-5 4 5zM7 10l4 5 4-5z" /></svg></button>
      <i class="blank"></i>
      <button class={favourite ? 'choice chosen' : 'choice'}>Favoris <span>★</span></button>
      <button class="choice">Période</button>
      <button class="choice">Outils De Dessin</button>
      <button class="choice">Indicateurs</button>
      <button class="choice">Figures</button>
      <i class="blank"></i>
      <button class="square" aria-label="Ajuster">{@render icon('stretch')}</button>
      <button class="square" aria-label="Réduire">{@render icon('minus')}</button>
      <button class="square" aria-label="Agrandir">{@render icon('plus')}</button>
      <button class="square on" aria-label="Réticule">{@render icon('cross')}</button>
      <button class="square on" aria-label="Échelle">{@render icon('spread')}</button>
    </div>
  </section>
{/snippet}

{#snippet browser(c: any, cls: string)}
  <article class="browser {cls}">
    <div class="titlebar">
      {@render logo()}
      <span>CMC Markets - Google Chrome</span>
      <button aria-label="Réduire">{@render icon('minimize')}</button>
      <button aria-label="Agrandir">{@render icon('maximize')}</button>
      <button aria-label="Fermer">{@render icon('close')}</button>
    </div>
    <div class="address">
      <svg class="site" viewBox="0 0 24 24"><circle cx="12" cy="12" r="12" /><path d="M12 8.5h6M6 15.5h6" /><circle class="ring" cx="8" cy="8.5" r="2" /><circle class="ring" cx="16" cy="15.5" r="2" /></svg>
      <p><b>platform.cmcmarkets.com</b>/popout.html#/app?r=FR&b=CMC-CFD</p>
    </div>
    {@render chartPanel(c, false)}
  </article>
{/snippet}

<svg class="defs" aria-hidden="true">
  <linearGradient id="plot-shade" x1="0" y1="0" x2="0" y2="1"><stop offset="0" stop-color="#fafafa" /><stop offset="1" stop-color="#ffffff" /></linearGradient>
</svg>

<main class="screens">
  <section class="screen">
    {@render appHeader(headers.first, 'inset')}
    <div class="pair">
      {@render chartPanel(charts.halfHour, false)}
      {@render chartPanel(charts.daily, false)}
    </div>
  </section>

  <section class="screen desktop">
    {@render browser(charts.oneMinute, 'left')}
    {@render browser(charts.nvidia, 'right')}
    <footer class="taskbar">
      <div class="apps">
        <button aria-label="Démarrer"><svg viewBox="0 0 24 24"><path fill="#1898ea" d="M0 0h11v11H0zM13 0h11v11H13zM0 13h11v11H0zM13 13h11v11H13z" /></svg></button>
        <label class="lookup">
          {@render icon('search')}
          <input type="text" placeholder="Rechercher" />
          <svg class="stamps" viewBox="0 0 42 22"><path fill="#d9c489" d="M0 0h19v22H0zM23 0h19v22H23z" /><path fill="#e9e6c0" d="M2 2h15v18H2z" /><path fill="#4d8a3c" d="M9 12h2v8H9zM25 2h15v18H25z" /><circle cx="10" cy="9" r="5" fill="#ef7a86" /><circle cx="32" cy="10" r="6" fill="#f0b429" /><circle cx="32" cy="10" r="3" fill="#5a3314" /></svg>
        </label>
        <button aria-label="Bureaux"><svg viewBox="0 0 24 24"><path fill="#e6e6e6" d="M6 2h16v16H6z" /><path fill="#222" d="M2 6h9v8h8v8H2z" /></svg></button>
        <button aria-label="Paramètres"><svg viewBox="0 0 24 24"><path fill="#6d7680" d="M9 0h6l1 4 4-1 3 5-3 3v2l3 3-3 5-4-1-1 4H9l-1-4-4 1-3-5 3-3v-2L1 8l3-5 4 1z" /><circle cx="12" cy="12" r="6" fill="#fff" /><circle cx="12" cy="12" r="4" fill="#0a5cad" /></svg></button>
        <button class="running" aria-label="Chrome"><svg viewBox="0 0 24 24"><circle cx="12" cy="12" r="12" fill="#f9c32c" /><path fill="#e5432f" d="M1.6 6a12 12 0 0 1 20.8 0H12a6 6 0 0 0-5.200 3z" /><path fill="#2da94f" d="M1.6 6L6.800 15a6 6 0 0 0 8 2.300L11.500 24A12 12 0 0 1 1.600 6z" /><circle cx="12" cy="12" r="6" fill="#fff" /><circle cx="12" cy="12" r="4.5" fill="#4285f4" /></svg></button>
        <button class="opened" aria-label="Explorateur"><svg viewBox="0 0 24 24"><path fill="#e8a200" d="M0 2h9l3 3v3H0z" /><path fill="#ffcf4a" d="M0 5h24v17H0z" /><path fill="#0a78d1" d="M4 15h16v7H4z" /></svg></button>
        <button aria-label="Power BI"><svg viewBox="0 0 24 24"><path fill="#0a78d7" d="M0 0h24v24H0z" /><path fill="#f2c811" d="M14 4h5v16h-5zM9 9h4v11H9zM5 14h3v6H5z" /></svg></button>
        <button aria-label="Excel"><svg viewBox="0 0 24 24"><path fill="#21a366" d="M7 1h17v11H7z" /><path fill="#107c41" d="M7 12h17v10H7z" /><path fill="#0b6a37" d="M0 6h13v12H0z" /><path d="M4 8.5l5 7M9 8.5l-5 7" stroke="#fff" stroke-width="2" /></svg></button>
        <button aria-label="Thunderbird"><svg viewBox="0 0 24 24"><circle cx="12" cy="13" r="11" fill="#1373d9" /><path fill="#0b4fae" d="M1 11C2 2 18-2 23 6l-7-1C9 4 5 8 5 14z" /><path fill="#fff" d="M6 9l7 3 6-3v6c-3 5-11 5-13 0z" /><path d="M6 9l7 5 6-5" fill="none" stroke="#1373d9" stroke-width="1.500" /></svg></button>
        <button aria-label="Bitvavo"><svg viewBox="0 0 24 24"><path d="M8 1h8l7 7v8l-7 7H8l-7-7V8z" fill="#fff" stroke="#222" stroke-width="2" /><path d="M9 6v12M9 6h4a3 3 0 0 1 0 6H9h5a3 3 0 0 1 0 6H9" fill="none" stroke="#222" stroke-width="3" /></svg></button>
        <button aria-label="Bureau distant"><svg viewBox="0 0 24 24"><circle cx="9" cy="11" r="8" fill="none" stroke="#b9c6d6" stroke-width="2" stroke-dasharray="2 2" /><path fill="#9fc4e8" d="M6 5l17-3v15l-17-2z" /><path fill="#3a8bd0" d="M8 7l13-3v11l-13-2z" /><path fill="#e8b030" d="M11 14l9 2v6l-9-2z" /></svg></button>
        <button aria-label="Boussole"><svg viewBox="0 0 24 24"><ellipse cx="12" cy="12" rx="9" ry="10" fill="#f6f6f6" stroke="#999" /><path d="M15 3l-5 10h4l-4 9" fill="none" stroke="#555" stroke-width="1.500" /></svg></button>
        <button aria-label="Agenda"><svg viewBox="0 0 24 24"><path fill="#1d9ae8" d="M2 3h22l-2 19H0z" /><path fill="#0b5fa8" d="M2 3h22l-1 4H1z" /><path fill="#fff" d="M5 12h3v4H5zM10 12h3v4h-3zM15 12h3v4h-3z" /></svg></button>
        <button aria-label="Loupe"><svg viewBox="0 0 24 24"><path fill="#2b9ae6" d="M4 1h20v15H4z" /><circle cx="7" cy="14" r="5" fill="#cfe8f8" stroke="#999" stroke-width="2" /><path d="M10 18l4 5" stroke="#777" stroke-width="2" /></svg></button>
      </div>
      <time>17:37<br />04/09/2024</time>
    </footer>
  </section>

  <section class="screen">
    {@render appHeader(headers.third, '')}
    <div class="trio">
      <div class="stack">
        {@render chartPanel(charts.fiveMinutes, false)}
        <section class="positions">
          <div class="tabbar">
            <button class="menu" aria-label="Menu">{@render icon('menu')}</button>
            <div class="tab">Positions (0)</div>
            <button class="add" aria-label="Nouvel onglet">{@render icon('plus')}</button>
            <div class="actions">
              {@render link('cyan')}
              <button aria-label="Agrandir">{@render icon('expand')}</button>
              <button aria-label="Fermer">{@render icon('close')}</button>
            </div>
          </div>
          <table>
            <thead>
              <tr><th class="mark">ID</th><th class="order">POSITION/ORDRE N° ▲</th><th class="total">PV/MV TOTALES {@render sorter()}</th><th class="stop">STOP LOSS</th><th class="take">TAKE PROFIT</th><th class="vente">VENTE</th><th class="achat">ACHAT</th></tr>
            </thead>
          </table>
          <p class="notice"><span>i</span>Aucune Transaction Ou Position</p>
        </section>
      </div>

      <div class="tickets">
        <button class="dismiss" aria-label="Fermer">{@render icon('close')}</button>
        {#each tickets as t (t.id)}
          <section class="ticket {t.gap}">
            <div class="ticket-head">
              <button class="menu" aria-label="Menu">{@render icon('menu')}</button>
              <div class="label"><span>{t.name}<br />Sep 2024</span>{#if t.search}{@render icon('search')}{/if}</div>
              <div class="change {t.up ? 'up' : 'down'}"><span>{t.up ? '▲' : '▼'} {t.change}</span><span>{t.points}</span></div>
              {@render link('')}
              <button class="shut" aria-label="Fermer">{@render icon('close')}</button>
            </div>
            <div class="ticket-body">
              <div class="sides">
                <span class="sell-word">VENDRE</span>
                <span class="spread {t.arrow === '▲' ? 'rise' : 'fall'}"><i>{t.arrow}</i><b>{t.spread}</b><i>{t.arrow}</i></span>
                <span class="buy-word">ACHETER</span>
              </div>
              <div class="prices">
                <button>{t.sell[0]}<small>{t.sell[1]}</small></button>
                <button>{t.buy[0]}<small>{t.buy[1]}</small></button>
              </div>
              <div class="limits">
                <span>B:{t.low}</span>
                <div class="amount"><input type="text" aria-label="Quantité {t.name}" value={t.qty} /><button aria-label="Choisir">{@render icon('chevron')}</button></div>
                <span>H:{t.high}</span>
              </div>
            </div>
          </section>
        {/each}
      </div>

      <div class="lists">
        {#each watchlists as w (w.id)}
          <section class="watch {w.id}">
            <div class="tabbar">
              <button class="menu" aria-label="Menu">{@render icon('menu')}</button>
              <div class="tab">{w.name}{@render icon('chevron')}{@render icon('zoom')}</div>
              <button class="add" aria-label="Nouvel onglet">{@render icon('plus')}</button>
              <div class="actions">
                {@render link('cyan')}
                <button aria-label="Agrandir">{@render icon('expand')}</button>
                <button aria-label="Fermer">{@render icon('close')}</button>
              </div>
            </div>
            <table>
              <colgroup><col class="c1" /><col class="c2" /><col class="c3" /><col class="c4" /><col class="c5" /><col class="c6" /><col class="c7" /></colgroup>
              <thead>
                <tr><th class="product">PRODUIT {@render sorter()}</th><th class="performance" colspan="2">PERFORMANCE {@render sorter()}</th><th>{w.low} {@render sorter()}</th><th>PLUS HAUT {@render sorter()}</th><th class="vente">VENTE</th><th class="achat">ACHAT</th></tr>
              </thead>
              <tbody>
                {#each w.rows as [name, up, change, points, low, high, sell, sellArrow, buy, buyArrow] (name)}
                  <tr class={up ? 'up' : 'down'}>
                    <th scope="row"><button class="more" aria-label="Options">⋮</button>{name}</th>
                    <td class="percent"><i>{up ? '▲' : '▼'}</i> {change}</td>
                    <td class="points">{points}</td>
                    <td>{low}</td>
                    <td>{high}</td>
                    <td class="ask">{sell}<i class={sellArrow === '▲' ? 'rising' : 'falling'}>{sellArrow}</i></td>
                    <td class="bid">{buy}<i class="rising">{buyArrow}</i></td>
                  </tr>
                {/each}
              </tbody>
            </table>
            {#if w.footer}
              <div class="watch-foot"><button>Vue Classique <i>▲</i></button></div>
            {/if}
          </section>
        {/each}
      </div>
    </div>
  </section>

  <section class="screen">
    {@render appHeader(headers.fourth, 'narrow')}
    <div class="workspaces">
      {#each workspaces as w, i (w)}<button class={i === 0 ? 'current' : ''}>{w}</button>{/each}
    </div>
    {@render chartPanel(charts.tenSeconds, true)}
  </section>
</main>

<style>
  :global(body) {
    margin: 0;
    background: #eef0f1;
    color: #111;
    font: 12px/14px 'Liberation Sans', Arial, sans-serif;
  }

  button,
  input,
  select {
    margin: 0;
    padding: 0;
    border: 0;
    border-radius: 0;
    background: none;
    color: inherit;
    font: inherit;
    appearance: none;
  }

  i {
    font-style: normal;
  }

  .defs {
    position: absolute;
    width: 0;
    height: 0;
  }

  .screens {
    display: grid;
    grid-template-columns: 1925fr 1920fr;
    grid-template-rows: 1fr 1fr;
    height: 100vh;
  }

  .screen {
    display: flex;
    flex-direction: column;
    min-width: 0;
    min-height: 0;
    overflow: hidden;
  }

  .icon {
    flex: none;
    width: 15px;
    height: 15px;
    fill: none;
    stroke: currentColor;
    stroke-width: 1.5;
  }

  .icon.solid {
    fill: #333;
    stroke: none;
  }

  .icon.solid circle {
    fill: #e3e9e9;
  }

  .icon.filled,
  .icon .fill {
    fill: currentColor;
    stroke: none;
  }

  .icon.ring circle {
    stroke-width: 4;
  }

  .icon.ring path {
    stroke: #fff;
    stroke-width: 2;
  }

  .logo {
    width: 22px;
    height: 26px;
    fill: #14b8dc;
  }

  .sorter {
    width: 6px;
    height: 8px;
    margin-left: 4px;
    fill: #566;
  }

  /* Application header */
  .app-header {
    display: flex;
    flex: none;
    height: 51px;
    box-sizing: border-box;
    border-bottom: 1px solid #9aabb4;
    background: #fff;
  }

  .app-header.inset {
    padding-left: 4px;
  }

  .user {
    width: 32px;
    border-right: 1px solid #ddd;
  }

  .avatar {
    display: block;
    width: 18px;
    height: 18px;
    margin: auto;
  }

  .avatar circle {
    fill: none;
    stroke: #777;
  }

  .avatar path {
    fill: #777;
  }

  .brand {
    display: flex;
    align-items: center;
    gap: 14px;
    width: 140px;
    padding-left: 14px;
    box-sizing: border-box;
  }

  .narrow .brand {
    width: 134px;
  }

  .brand div {
    display: grid;
    gap: 2px;
  }

  .brand strong {
    color: #222;
    font-size: 13px;
    font-weight: 400;
  }

  .brand span {
    color: #667;
    font-size: 10px;
  }

  .brand b {
    color: #1a8aa5;
    font-weight: 400;
  }

  .brand .live {
    color: #c08420;
  }

  .find {
    width: 50px;
    background: #00b1cd;
    color: #fff;
  }

  .find .icon {
    width: 18px;
    height: 18px;
  }

  .middle {
    display: grid;
    flex: 1;
    grid-template-rows: 25px 1fr;
  }

  .layouts {
    display: flex;
    font-size: 11px;
  }

  .layouts button {
    min-width: 81px;
    padding: 0 10px;
  }

  .layouts .active {
    color: #0a7cff;
  }

  .layouts .mini {
    min-width: 35px;
    color: #666;
  }

  nav {
    display: flex;
    border-top: 1px solid #ccc;
    background: #e3e9e9;
    color: #333;
  }

  nav button {
    position: relative;
    display: flex;
    gap: 8px;
    align-items: center;
    padding: 0 10px;
    border-right: 1px solid #c5cccc;
  }

  nav .icon {
    width: 16px;
    height: 16px;
    stroke-width: 2;
  }

  nav .icon.solid {
    stroke-width: 0;
  }

  nav .dim {
    color: #999;
  }

  .alerts {
    position: absolute;
    top: 2px;
    left: 4px;
    width: 12px;
    border-radius: 6px;
    background: #f00;
    color: #fff;
    font-size: 10px;
    line-height: 12px;
  }

  .cta {
    display: flex;
    gap: 9px;
    align-items: center;
    padding: 0 15px;
    background: #00b1cd;
    color: #fff;
    font-size: 14px;
    line-height: 17px;
    text-align: left;
  }

  .cta .icon {
    width: 20px;
    height: 20px;
    stroke-width: 1;
  }

  .recap {
    width: 177px;
    background: #ecedef;
    color: #777;
    font-size: 11px;
  }

  .fold {
    width: 19px;
    border-right: 1px solid #ccc;
    border-left: 1px solid #ccc;
  }

  .fold .icon {
    width: 8px;
    stroke-width: 2;
  }

  .clock {
    display: grid;
    grid-template-rows: 25px 1fr;
    width: 79px;
    color: #777;
    font-size: 14px;
    text-align: center;
  }

  .clock time {
    line-height: 25px;
  }

  .clock div {
    display: grid;
    grid-template-columns: 1fr 1fr;
    border-top: 1px solid #ccc;
    background: #e3e9e9;
    color: #333;
  }

  .clock button + button {
    border-left: 1px solid #c5cccc;
  }

  .clock .icon {
    width: 16px;
    height: 16px;
  }

  /* Chart panels */
  .pair {
    display: grid;
    flex: 1;
    grid-template-columns: 1fr 1fr;
    gap: 4px;
    min-height: 0;
    padding: 7px 1px 19px 10px;
    background: linear-gradient(90deg, #e2eff8, #dff7f8 30%, #dff0f8);
  }

  .chart {
    display: flex;
    flex: 1;
    flex-direction: column;
    min-width: 0;
    min-height: 0;
    outline: 1px solid #999;
    background: #fff;
  }

  .tabbar {
    display: flex;
    flex: none;
    height: 30px;
    box-sizing: border-box;
    border-bottom: 1px solid #b0b0b0;
    background: linear-gradient(#dcdcdc, #cfcfcf);
  }

  .menu {
    flex: none;
    width: 32px;
    color: #444;
  }

  .menu .icon {
    width: 13px;
    height: 13px;
    stroke-width: 2;
  }

  .faded {
    color: #aaa;
  }

  .tab {
    display: flex;
    gap: 6px;
    align-items: center;
    height: 30px;
    padding: 0 9px;
    border-right: 1px solid #b0b0b0;
    border-left: 1px solid #b0b0b0;
    background: #fff;
  }

  .tab .icon {
    color: #666;
    stroke-width: 1;
  }

  .round {
    width: 14px;
    border: 1px solid #888;
    border-radius: 8px;
    color: #666;
    text-align: center;
  }

  .add {
    width: 32px;
    color: #777;
  }

  .add .icon {
    width: 13px;
  }

  .change {
    display: grid;
    align-content: center;
    width: 63px;
    height: 30px;
    margin-left: auto;
    padding-right: 5px;
    box-sizing: border-box;
    background: #fff;
    line-height: 13px;
    text-align: right;
  }

  .up {
    color: #1d5c0d;
  }

  .down {
    color: #b81414;
  }

  .quote {
    position: relative;
    display: grid;
    grid-template-columns: 74px 74px;
    color: #fff;
    font-weight: 700;
  }

  .quote.small {
    grid-template-columns: 58px 58px;
  }

  .quote button {
    padding-bottom: 8px;
  }

  .sell {
    background: #c18225;
  }

  .buy {
    background: #27a8be;
  }

  .quote .spread {
    position: absolute;
    right: 0;
    bottom: 0;
    left: 0;
  }

  .spread {
    display: flex;
    gap: 4px;
    justify-content: center;
    font-size: 10px;
    line-height: 10px;
  }

  .spread b {
    padding: 0 3px;
    border: 1px solid #555;
    background: #777;
    font-weight: 400;
  }

  .fall i {
    color: #f44;
  }

  .rise i {
    color: #0f0;
  }

  .link-bars {
    flex: none;
    width: 9px;
    height: 26px;
    margin: 2px 0 0 4px;
  }

  .cells {
    fill: #bfbfbf;
  }

  .on-green {
    fill: #00f57f;
  }

  .on-cyan {
    fill: #00dcff;
  }

  .ticks {
    stroke: #555;
  }

  .actions {
    display: flex;
    color: #666;
  }

  .actions button {
    width: 22px;
  }

  .actions .icon {
    width: 12px;
    height: 12px;
  }

  .quote ~ .actions {
    padding: 0 2px 0 3px;
  }

  .toolbar {
    display: flex;
    flex: none;
    height: 22px;
    box-sizing: border-box;
    border-bottom: 1px solid #c5c8ca;
    background: #fff;
  }

  .toolbar > * {
    border-right: 1px solid #d5d5d5;
  }

  .square {
    flex: none;
    width: 33px;
    color: #666;
  }

  .square .icon {
    vertical-align: middle;
  }

  .period {
    width: 85px;
    padding-left: 7px;
  }

  .range {
    width: 90px;
    padding-left: 6px;
  }

  .chip {
    min-width: 23px;
    padding: 0 4px;
    color: #0a7cff;
    font-size: 11px;
    font-weight: 700;
  }

  .word {
    display: flex;
    gap: 8px;
    align-items: center;
    padding: 0 10px;
  }

  .word .icon {
    color: #666;
  }

  .settings {
    display: flex;
    gap: 8px;
    align-items: center;
    margin-left: auto;
    padding: 0 10px;
    border: 0;
  }

  .settings .icon {
    color: #555;
  }

  .plot {
    display: block;
    flex: 1 1 0;
    width: 100%;
    min-height: 0;
    fill: #111;
    font-family: 'Liberation Sans', Arial, sans-serif;
  }

  .crisp {
    shape-rendering: crispEdges;
  }

  .note {
    font-weight: 700;
    white-space: pre;
  }

  .bottombar {
    display: flex;
    flex: none;
    height: 22px;
    box-sizing: border-box;
    border-top: 1px solid #a5a9ab;
    background: #dcddde;
    font-size: 11px;
  }

  .bottombar > * {
    border-right: 1px solid #c3c6c8;
  }

  .bottombar .square {
    width: 30px;
    box-sizing: border-box;
  }

  .bottombar .on {
    background: #edeff1;
    color: #0a7cff;
  }

  .blank {
    flex: 1;
    box-sizing: border-box;
  }

  .choice {
    position: relative;
    flex: none;
    width: 100px;
    box-sizing: border-box;
  }

  .choice span {
    position: absolute;
    right: 8px;
    color: #555;
    font-size: 16px;
  }

  .chosen {
    background: #edeff1;
  }

  .chosen,
  .chosen span {
    color: #0a7cff;
  }

  .choice:has(span) {
    padding-right: 46px;
  }

  /* Drawing shortcuts */
  .drawings {
    display: flex;
    flex: none;
    height: 71px;
    padding-left: 22px;
    box-sizing: border-box;
    overflow: hidden;
    border-top: 1px solid #aaa;
    background: #f5f5f5;
  }

  .drawing {
    display: grid;
    flex: none;
    grid-template-rows: 44px 14px;
    gap: 3px;
    justify-items: center;
    width: 60px;
    padding-top: 8px;
    align-content: start;
    color: #566;
    font-size: 10px;
    font-weight: 700;
    white-space: nowrap;
  }

  .drawing span {
    display: grid;
    place-items: center;
    width: 42px;
    height: 42px;
    border: 1px solid #bbb;
    border-radius: 4px;
    background: #fff;
  }

  .drawing svg {
    width: 24px;
    height: 24px;
    overflow: visible;
    fill: none;
    stroke: #777;
    stroke-width: 2;
  }

  .drawing circle {
    stroke-width: 1.5;
  }

  .drawing .gold {
    stroke: #dca000;
  }

  .drawing .sky {
    stroke: #00b8ff;
  }

  .drawing .yellow {
    stroke: #fc0;
  }

  .drawing .green {
    stroke: #43b000;
  }

  .drawing .red {
    stroke: #ff4a10;
  }

  .drawing .bold {
    stroke-width: 3;
  }

  .drawing .dots {
    stroke-width: 1;
    stroke-dasharray: 2 1;
  }

  .drawing .bold.dots {
    stroke-width: 2;
    stroke-dasharray: 3 2;
  }

  .drawing rect {
    stroke: none;
  }

  .empty {
    flex: none;
    width: 44px;
    height: 43px;
    margin: 8px 8px 0;
    border-radius: 4px;
    background: #e5e5e5;
  }

  .workspaces {
    display: flex;
    flex: none;
    gap: 4px;
    height: 25px;
    padding: 3px 2px;
    box-sizing: border-box;
    background: #b5b7ba;
  }

  .workspaces button {
    padding: 0 20px;
    border-radius: 3px;
    background: #ecedef;
  }

  .workspaces .current {
    background: #fff;
    color: #0a7cff;
  }

  /* Windows desktop */
  .desktop {
    position: relative;
    background: linear-gradient(#b3b3b3, #9c9c9c);
  }

  .browser {
    position: absolute;
    display: flex;
    flex-direction: column;
    overflow: hidden;
    border-radius: 8px;
    outline: 1px solid #888;
    box-shadow: 0 4px 22px #0006;
  }

  .browser.left {
    top: 12px;
    left: 17px;
    width: 967px;
    height: 1000px;
  }

  .browser.right {
    top: 20px;
    left: 986px;
    width: 915px;
    height: 986px;
  }

  .titlebar {
    display: flex;
    flex: none;
    gap: 6px;
    align-items: center;
    height: 30px;
    padding: 0 3px 0 5px;
    background: #b3b3b3;
    color: #666;
    font: 12px/14px 'Open Sans', sans-serif;
  }

  .titlebar .logo {
    width: 14px;
    height: 16px;
  }

  .titlebar span {
    flex: 1;
  }

  .titlebar button {
    width: 40px;
  }

  .titlebar .icon {
    width: 13px;
  }

  .address {
    display: flex;
    flex: none;
    gap: 9px;
    align-items: center;
    height: 36px;
    padding: 0 5px;
    box-sizing: border-box;
    border-top: 1px solid #a3a3a3;
    border-bottom: 2px solid #999;
    background: #c8c8c8;
  }

  .address p {
    margin: 0;
    color: #555;
    font: 13px/18px 'Open Sans', sans-serif;
  }

  .address b {
    color: #222;
    font-weight: 400;
  }

  .site {
    width: 24px;
    height: 24px;
    fill: #e3e3e3;
    stroke: none;
  }

  .site path,
  .site .ring {
    stroke: #333;
    stroke-width: 2;
  }

  .taskbar {
    display: grid;
    grid-template-columns: 1fr auto 1fr;
    align-items: center;
    height: 49px;
    margin-top: auto;
    background: #f3f3f3;
    font: 11px/16px 'Open Sans', sans-serif;
  }

  .apps {
    display: flex;
    grid-column: 2;
    gap: 4px;
    align-items: center;
  }

  .apps > button {
    width: 40px;
    height: 40px;
    border-bottom: 3px solid transparent;
    box-sizing: border-box;
  }

  .apps > button > svg {
    display: block;
    width: 24px;
    height: 24px;
    margin: 3px auto 0;
  }

  .apps > .running {
    border-radius: 4px;
    border-bottom-color: #0a78d4;
    background: #fff;
  }

  .apps > .opened {
    border-bottom-color: #bbb;
  }

  .lookup {
    display: flex;
    gap: 10px;
    align-items: center;
    width: 218px;
    height: 32px;
    padding: 0 8px 0 10px;
    box-sizing: border-box;
    border: 1px solid #ddd;
    border-radius: 16px;
    background: #fff;
  }

  .lookup .icon {
    transform: scaleX(-1);
  }

  .lookup input {
    width: 122px;
    font: 12px/16px 'Open Sans', sans-serif;
  }

  .lookup input::placeholder {
    color: #555;
  }

  .stamps {
    width: 42px;
    height: 22px;
  }

  .taskbar time {
    padding-right: 18px;
    color: #333;
    text-align: right;
  }

  /* Third screen */
  .trio {
    display: grid;
    flex: 1;
    grid-template-columns: 922fr 270fr 733fr;
    min-height: 0;
    padding-top: 2px;
    background: #e3e3e3;
  }

  .stack {
    display: flex;
    flex-direction: column;
    gap: 7px;
    min-width: 0;
    min-height: 0;
  }

  .positions {
    flex: none;
    height: 219px;
    background: #fff;
  }

  .positions .actions,
  .watch .actions {
    margin-left: auto;
  }

  .positions table {
    width: 100%;
    border-collapse: collapse;
    table-layout: fixed;
  }

  .positions th {
    height: 24px;
    padding: 0 10px 0 0;
    border-bottom: 1px solid #ddd;
    color: #333;
    font-size: 10px;
    text-align: right;
    white-space: nowrap;
  }

  .positions .mark {
    width: 32px;
    padding-left: 8px;
    text-align: left;
  }

  .positions .order {
    width: 250px;
    text-align: left;
  }

  .positions .total {
    width: 200px;
  }

  .positions .stop {
    width: 125px;
  }

  .positions .take {
    width: 100px;
  }

  .positions .achat {
    padding-right: 56px;
  }

  .positions .vente,
  .watch .vente {
    color: #d48400;
  }

  .positions .achat,
  .watch .achat {
    color: #0792ac;
  }

  .positions .vente {
    width: 65px;
  }

  .notice {
    display: flex;
    gap: 16px;
    align-items: center;
    height: 50px;
    margin: 44px 100px 0;
    border: 1px solid #ddd;
    color: #555;
    font-size: 13px;
  }

  .notice span {
    display: grid;
    place-items: center;
    width: 40px;
    height: 50px;
    background: radial-gradient(circle, #555 9px, #eee 10px);
    color: #fff;
    font-weight: 700;
  }

  .tickets {
    display: flex;
    flex-direction: column;
    padding: 0 7px 0 10px;
    background: #f0f0f0;
  }

  .dismiss {
    align-self: flex-end;
    width: 24px;
    height: 24px;
    margin-bottom: 9px;
    color: #666;
  }

  .ticket {
    flex: none;
    height: 108px;
    box-sizing: border-box;
    border: 1px solid #8a8a8a;
    border-radius: 3px;
  }

  .ticket.wide {
    margin-bottom: 18px;
  }

  .ticket.tight {
    margin-bottom: 4px;
  }

  .ticket.huge {
    margin-bottom: 74px;
  }

  .ticket-head {
    display: flex;
    height: 30px;
    background: linear-gradient(#dcdcdc, #c8c8c8);
  }

  .label {
    display: flex;
    gap: 6px;
    align-items: center;
    padding: 0 9px;
    background: #fff;
    font-size: 10px;
    line-height: 11px;
  }

  .label .icon {
    stroke-width: 1;
  }

  .shut {
    width: 26px;
    color: #666;
  }

  .shut .icon {
    width: 12px;
  }

  .ticket-body {
    display: grid;
    grid-template-rows: 18px 1fr 20px;
    height: 76px;
    background: linear-gradient(#7c7c7e, #96979a);
    color: #fff;
  }

  .sides {
    display: grid;
    grid-template-columns: 1fr auto 1fr;
    padding: 0 7px;
    font-size: 11px;
    font-weight: 700;
    line-height: 18px;
  }

  .sides .spread {
    gap: 3px;
    font-size: 12px;
    line-height: 14px;
  }

  .sides .spread b {
    padding: 0 7px;
  }

  .sides .spread i:empty {
    display: none;
  }

  .sell-word {
    color: #fbeeb5;
  }

  .buy-word {
    color: #b5f3fb;
    text-align: right;
  }

  .prices {
    display: grid;
    grid-template-columns: 1fr 1fr;
    font-size: 27px;
    line-height: 36px;
  }

  .prices button + button {
    border-left: 1px solid #6a6a6a;
  }

  .prices small {
    font-size: 20px;
  }

  .limits {
    display: grid;
    grid-template-columns: 1fr auto 1fr;
    align-items: center;
    padding: 0 5px;
    color: #e6e6e6;
    font-size: 12px;
  }

  .limits > span:last-child {
    text-align: right;
  }

  .amount {
    display: flex;
    height: 16px;
    background: #dcdde0;
    color: #222;
  }

  .amount input {
    width: 65px;
    text-align: center;
  }

  .amount button {
    width: 16px;
    background: #fff;
  }

  .amount .icon {
    width: 8px;
    height: 8px;
    stroke-width: 2;
  }

  .lists {
    display: flex;
    flex-direction: column;
    gap: 8px;
    min-width: 0;
    padding: 0 6px 2px 0;
  }

  .watch {
    display: flex;
    flex-direction: column;
    box-sizing: border-box;
    border-bottom: 1px solid #aaa;
    background: #f8f8f8;
    outline: 1px solid #ccc;
  }

  .west {
    height: 342px;
  }

  .asia {
    height: 180px;
  }

  .rates {
    height: 288px;
  }

  .raw {
    flex: 1;
  }

  .watch .tab {
    padding: 0 7px;
  }

  .watch .tab .icon:first-of-type {
    width: 10px;
  }

  .watch table {
    width: 100%;
    border-collapse: collapse;
    table-layout: fixed;
    background: #fff;
  }

  .watch .c1 {
    width: 207px;
  }

  .watch .c2 {
    width: 62px;
  }

  .watch .c3 {
    width: 55px;
  }

  .watch .c4 {
    width: 88px;
  }

  .watch .c5 {
    width: 100px;
  }

  .watch .c7 {
    width: 104px;
  }

  .asia .c1,
  .rates .c1 {
    width: 222px;
  }

  .asia .c3,
  .rates .c3,
  .raw .c3 {
    width: 78px;
  }

  .asia .c4 {
    width: 114px;
  }

  .rates .c4 {
    width: 60px;
  }

  .raw .c1 {
    width: 214px;
  }

  .raw .c4 {
    width: 100px;
  }

  .asia .c7 {
    width: 80px;
  }

  .raw .c7 {
    width: 84px;
  }

  .watch thead th {
    height: 24px;
    padding: 0 9px 0 0;
    border-bottom: 1px solid #d5d5d5;
    color: #566;
    font-size: 10px;
    text-align: right;
    white-space: nowrap;
  }

  .watch thead .product {
    padding-left: 6px;
    text-align: left;
  }

  .watch thead .performance {
    padding-right: 28px;
  }

  .west thead .performance {
    padding-right: 16px;
  }

  .watch thead .vente {
    padding-right: 10px;
    color: #d48400;
  }

  .watch thead .achat {
    color: #0792ac;
  }

  .watch tbody th,
  .watch td {
    height: 20px;
    padding: 0 6px 0 0;
    text-align: right;
    white-space: nowrap;
  }

  .watch tbody th {
    color: #111;
    text-align: left;
  }

  .watch td {
    border-left: 1px solid #eee;
    color: #111;
  }

  .watch td.points {
    border-left: 0;
  }

  .watch tbody tr:nth-child(even) {
    background: #f4f4f4;
  }

  .watch td.percent {
    padding-right: 0;
    padding-left: 9px;
    text-align: left;
  }

  .watch .up .percent,
  .watch .up .points {
    color: #2a8a1a;
  }

  .watch .down .percent,
  .watch .down .points {
    color: #c8141e;
  }

  .watch td.ask {
    padding-right: 4px;
    color: #6b4a10;
  }

  .watch td.bid {
    padding-right: 4px;
    border-left: 0;
    color: #1d5a6e;
  }

  .ask i,
  .bid i {
    display: inline-block;
    width: 10px;
    font-size: 10px;
    text-align: center;
  }

  .rising {
    color: #2a8a1a;
  }

  .falling {
    color: #e01010;
  }

  .more {
    width: 15px;
    height: 15px;
    margin: 0 5px 0 8px;
    border: 1px solid #99a5a5;
    border-radius: 8px;
    line-height: 12px;
  }

  .watch-foot {
    display: flex;
    justify-content: flex-end;
    height: 20px;
    margin-top: auto;
    border-top: 1px solid #bbb;
    background: #dcdde0;
  }

  .watch-foot button {
    padding: 0 8px;
    border-left: 1px solid #bbb;
  }

  .watch-foot i {
    color: #888;
    font-size: 9px;
  }
</style>
